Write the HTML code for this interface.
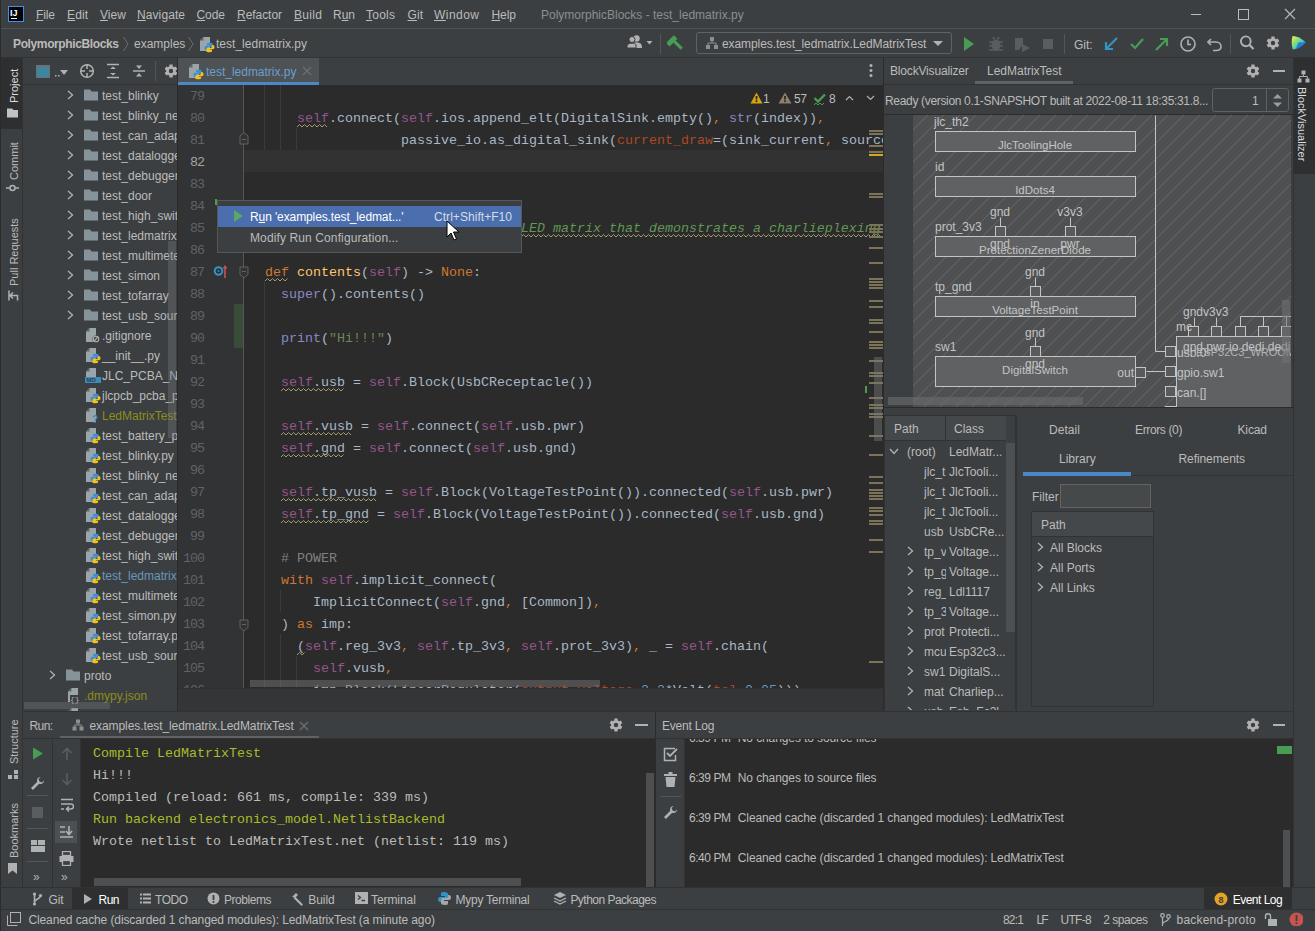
<!DOCTYPE html><html><head><meta charset="utf-8"><style>
*{box-sizing:border-box;margin:0;padding:0}
html,body{width:1315px;height:931px;overflow:hidden;background:#3c3f41;font-family:"Liberation Sans",sans-serif;font-size:12px;color:#bbbbbb;position:relative}
.a{position:absolute}
.t{position:absolute;white-space:pre}
.mono{font-family:"Liberation Mono",monospace}
.u{text-decoration:underline;text-underline-offset:1px}
</style></head><body>
<div class="a" style="left:0px;top:0px;width:1315px;height:931px;background:#3c3f41;"></div>
<div class="a" style="left:0px;top:28px;width:1315px;height:1px;background:#4f5254;"></div>
<div class="a" style="left:0px;top:57px;width:1315px;height:1px;background:#323232;"></div>
<div class="a" style="left:8px;top:6px;width:16px;height:16px;background:#000;border:1px solid #3d8ef0"></div>
<div class="t " style="left:10px;top:7.38px;font-size:9px;line-height:13px;color:#ffffff;font-weight:700;letter-spacing:0px">IJ</div>
<div class="a" style="left:11px;top:18px;width:6px;height:1px;background:#ffffff;"></div>
<div class="t " style="left:36px;top:7.34px;font-size:12px;line-height:17px;color:#bbbbbb;letter-spacing:-0.112px;"><span class="u">F</span>ile</div>
<div class="t " style="left:67px;top:7.34px;font-size:12px;line-height:17px;color:#bbbbbb;letter-spacing:0.107px;"><span class="u">E</span>dit</div>
<div class="t " style="left:100px;top:7.34px;font-size:12px;line-height:17px;color:#bbbbbb;letter-spacing:0.069px;"><span class="u">V</span>iew</div>
<div class="t " style="left:137px;top:7.34px;font-size:12px;line-height:17px;color:#bbbbbb;letter-spacing:0.091px;"><span class="u">N</span>avigate</div>
<div class="t " style="left:196.5px;top:7.34px;font-size:12px;line-height:17px;color:#bbbbbb;letter-spacing:-0.063px;"><span class="u">C</span>ode</div>
<div class="t " style="left:237px;top:7.34px;font-size:12px;line-height:17px;color:#bbbbbb;letter-spacing:-0.050px;"><span class="u">R</span>efactor</div>
<div class="t " style="left:294px;top:7.34px;font-size:12px;line-height:17px;color:#bbbbbb;letter-spacing:0.329px;"><span class="u">B</span>uild</div>
<div class="t " style="left:333px;top:7.34px;font-size:12px;line-height:17px;color:#bbbbbb;letter-spacing:-0.007px;">R<span class="u">u</span>n</div>
<div class="t " style="left:366px;top:7.34px;font-size:12px;line-height:17px;color:#bbbbbb;letter-spacing:0.246px;"><span class="u">T</span>ools</div>
<div class="t " style="left:407.5px;top:7.34px;font-size:12px;line-height:17px;color:#bbbbbb;letter-spacing:0.083px;"><span class="u">G</span>it</div>
<div class="t " style="left:434px;top:7.34px;font-size:12px;line-height:17px;color:#bbbbbb;letter-spacing:0.464px;"><span class="u">W</span>indow</div>
<div class="t " style="left:491.5px;top:7.34px;font-size:12px;line-height:17px;color:#bbbbbb;letter-spacing:-0.060px;"><span class="u">H</span>elp</div>
<div class="t " style="left:541px;top:7.34px;font-size:12px;line-height:17px;color:#8b8e90;">PolymorphicBlocks - test_ledmatrix.py</div>
<div class="a" style="left:1191px;top:14px;width:10px;height:1px;background:#bbbbbb;"></div>
<div class="a" style="left:1238px;top:9px;width:11px;height:11px;border:1px solid #bbbbbb"></div>
<svg class="a" style="left:1284px;top:8px;" width="12" height="12" viewBox="0 0 12 12"><path d="M1 1L11 11M11 1L1 11" stroke="#bbbbbb" stroke-width="1.1"/></svg>
<div class="t " style="left:13px;top:36.34px;font-size:12px;line-height:17px;color:#bbbbbb;font-weight:700;letter-spacing:-0.377px;">PolymorphicBlocks</div>
<svg class="a" style="left:122px;top:36px;" width="8" height="16" viewBox="0 0 8 16"><path d="M1.5 1L6 8L1.5 15" stroke="#6b6e70" fill="none" stroke-width="1"/></svg>
<div class="t " style="left:134px;top:36.34px;font-size:12px;line-height:17px;color:#bbbbbb;">examples</div>
<svg class="a" style="left:187px;top:36px;" width="8" height="16" viewBox="0 0 8 16"><path d="M1.5 1L6 8L1.5 15" stroke="#6b6e70" fill="none" stroke-width="1"/></svg>
<svg class="a" style="left:199px;top:36px;" width="16" height="17" viewBox="0 0 16 17"><path d="M4.5 1H11V15H1V4.5Z" fill="#9aa4a9"/><path d="M1 4.5L4.5 1V4.5Z" fill="#5f6669"/><circle cx="11" cy="11.5" r="5.6" fill="#3c3f41" opacity="0"/><g transform="translate(5.5,6.5)"><path d="M4.6 0.2C2.4 0.2 2.5 1.2 2.5 1.2V2.7H4.7V3.2H1.6C0.2 3.2 0 4.3 0 5.4C0 6.6 0.6 7.6 1.6 7.6H2.5V6.3C2.5 5.3 3.3 4.6 4.3 4.6H6.7C7.5 4.6 8.1 4 8.1 3.2V1.2C8.1 0.6 7.4 0.2 4.6 0.2Z" fill="#3d8fd1"/><path d="M5.4 9.8C7.6 9.8 7.5 8.8 7.5 8.8V7.3H5.3V6.8H8.4C9.8 6.8 10 5.7 10 4.6C10 3.4 9.4 2.4 8.4 2.4H7.5V3.7C7.5 4.7 6.7 5.4 5.7 5.4H3.3C2.5 5.4 1.9 6 1.9 6.8V8.8C1.9 9.4 2.6 9.8 5.4 9.8Z" fill="#f2c41b"/></g></svg>
<div class="t " style="left:216px;top:36.34px;font-size:12px;line-height:17px;color:#bbbbbb;letter-spacing:0.018px;">test_ledmatrix.py</div>
<svg class="a" style="left:627px;top:34px;" width="28" height="16" viewBox="0 0 28 16"><circle cx="9.5" cy="4.5" r="3.2" fill="#afb1b3"/><path d="M4 14C4 9.5 6 8.5 9.5 8.5C13 8.5 15 9.5 15 14Z" fill="#afb1b3"/><circle cx="5" cy="5.5" r="3" fill="#afb1b3" stroke="#3c3f41" stroke-width="1"/><path d="M0 14C0 10 1.5 9.2 5 9.2C7 9.2 8.5 9.8 9 11V14Z" fill="#afb1b3" stroke="#3c3f41" stroke-width="1"/><path d="M19.5 7H25.5L22.5 10.5Z" fill="#afb1b3"/></svg>
<div class="a" style="left:660px;top:34px;width:1px;height:20px;background:#515658;"></div>
<svg class="a" style="left:667px;top:34px;" width="18" height="18" viewBox="0 0 18 18"><g transform="rotate(-45 9 9)"><rect x="2" y="2" width="11" height="5" fill="#499c54"/><rect x="7.5" y="6" width="3" height="11" fill="#499c54"/></g></svg>
<div class="a" style="left:696px;top:32px;width:256px;height:22px;border:1px solid #5e6365;border-radius:3px"></div>
<svg class="a" style="left:705px;top:36px;" width="14" height="14" viewBox="0 0 14 14"><rect x="5" y="1" width="4" height="4" fill="#8c8e90"/><rect x="1" y="9" width="4" height="4" fill="#8c8e90"/><rect x="9" y="9" width="4" height="4" fill="#8c8e90"/><path d="M7 5V7M3 9V7H11V9" stroke="#8c8e90" fill="none"/></svg>
<div class="t " style="left:722px;top:36.34px;font-size:12px;line-height:17px;color:#bbbbbb;letter-spacing:-0.084px;">examples.test_ledmatrix.LedMatrixTest</div>
<svg class="a" style="left:932px;top:40px;" width="12" height="8" viewBox="0 0 12 8"><path d="M1 1H11L6 6Z" fill="#afb1b3"/></svg>
<svg class="a" style="left:963px;top:36px;" width="12" height="16" viewBox="0 0 12 16"><path d="M1 1L11 8L1 15Z" fill="#499c54"/></svg>
<svg class="a" style="left:988px;top:35px;" width="16" height="17" viewBox="0 0 16 17"><ellipse cx="8" cy="10" rx="4.5" ry="5.5" fill="#5a5d5f"/><path d="M1 7H15M1 11H15M1 15H15M5 2L6.5 4.5M11 2L9.5 4.5" stroke="#5a5d5f" stroke-width="1.5"/></svg>
<svg class="a" style="left:1013px;top:36px;" width="18" height="17" viewBox="0 0 18 17"><path d="M2 2H10V8L6 14H2Z" fill="#5a5d5f"/><path d="M9 8L17 12L9 16Z" fill="#5a5d5f"/></svg>
<div class="a" style="left:1043px;top:39px;width:10px;height:10px;background:#5a5d5f;"></div>
<div class="a" style="left:1064px;top:34px;width:1px;height:20px;background:#515658;"></div>
<div class="t " style="left:1074px;top:37.34px;font-size:12px;line-height:17px;color:#bbbbbb;">Git:</div>
<svg class="a" style="left:1103px;top:36px;" width="16" height="16" viewBox="0 0 16 16"><path d="M14 2L3 13M3 6V13H10" stroke="#3592c4" stroke-width="2.2" fill="none"/></svg>
<svg class="a" style="left:1129px;top:36px;" width="16" height="16" viewBox="0 0 16 16"><path d="M2 8L6 12L14 3" stroke="#499c54" stroke-width="2.2" fill="none"/></svg>
<svg class="a" style="left:1154px;top:36px;" width="16" height="16" viewBox="0 0 16 16"><path d="M2 14L13 3M6 3H13V10" stroke="#499c54" stroke-width="2.2" fill="none"/></svg>
<svg class="a" style="left:1179px;top:35px;" width="18" height="18" viewBox="0 0 18 18"><circle cx="9" cy="9" r="7" stroke="#afb1b3" stroke-width="1.6" fill="none"/><path d="M9 4.5V9.5H12" stroke="#afb1b3" stroke-width="1.6" fill="none"/></svg>
<svg class="a" style="left:1207px;top:36px;" width="16" height="16" viewBox="0 0 16 16"><path d="M4 3L1 6L4 9" stroke="#afb1b3" stroke-width="1.6" fill="none"/><path d="M1.5 6H9C12 6 14 8 14 10.5C14 13 12 14.5 9 14.5H6" stroke="#afb1b3" stroke-width="1.6" fill="none"/></svg>
<div class="a" style="left:1230px;top:34px;width:1px;height:20px;background:#515658;"></div>
<svg class="a" style="left:1239px;top:34px;" width="17" height="17" viewBox="0 0 17 17"><circle cx="6.8" cy="7.3" r="4.9" stroke="#afb1b3" stroke-width="1.9" fill="none"/><path d="M10.3 10.8L14.5 15" stroke="#afb1b3" stroke-width="2.2"/></svg>
<svg class="a" style="left:1266px;top:36px;" width="14" height="14" viewBox="0 0 14 14"><g transform="scale(1.0)"><path d="M5.32 2.40L5.40 0.60L8.60 0.60L8.68 2.40L9.45 2.76L10.15 3.25L11.75 2.42L13.34 5.18L11.83 6.15L11.90 7.00L11.83 7.85L13.34 8.82L11.75 11.58L10.15 10.75L9.45 11.24L8.68 11.60L8.60 13.40L5.40 13.40L5.32 11.60L4.55 11.24L3.85 10.75L2.25 11.58L0.66 8.82L2.17 7.85L2.10 7.00L2.17 6.15L0.66 5.18L2.25 2.42L3.85 3.25L4.55 2.76Z" fill="#afb1b3"/><circle cx="7" cy="7" r="2.2" fill="#3c3f41"/></g></svg>
<svg class="a" style="left:1291px;top:35px;" width="16" height="16" viewBox="0 0 16 16"><defs><linearGradient id="lg1" x1="0" y1="0" x2="1" y2="1"><stop offset="0" stop-color="#f5f23a"/><stop offset="0.35" stop-color="#8fdc7c"/><stop offset="0.7" stop-color="#21c7d9"/><stop offset="1" stop-color="#1a7fe0"/></linearGradient></defs><path d="M1.5 1C6 1 10 3 14.5 7.2C11 11.5 6.5 14 1.8 14.6C0.4 10 0.3 5.5 1.5 1Z" fill="url(#lg1)"/><path d="M7.5 7.2H14.5C11 11.5 8 13.5 4.5 14.3Z" fill="#1d6fd8" opacity="0.8"/></svg>
<div class="a" style="left:0px;top:0px;width:1px;height:931px;background:#2b2b2b;"></div>
<div class="a" style="left:22px;top:58px;width:1px;height:830px;background:#323232;"></div>
<div class="a" style="left:1px;top:58px;width:21px;height:71px;background:#2d2f30;"></div>
<div class="t" style="left:13.7px;top:102.5px;font-size:11px;line-height:14px;color:#dddddd;transform-origin:0 0;transform:rotate(-90deg) translate(0,-7px)">Project</div>
<svg class="a" style="left:7px;top:108px;" width="12" height="10" viewBox="0 0 12 10"><path d="M0 0.5H5L6.5 2H11V9.5H0Z" fill="#c0c2c4"/></svg>
<div class="t" style="left:13.7px;top:179.5px;font-size:11px;line-height:14px;color:#bbbbbb;transform-origin:0 0;transform:rotate(-90deg) translate(0,-7px)">Commit</div>
<svg class="a" style="left:6px;top:184px;" width="13" height="8" viewBox="0 0 13 8"><circle cx="6.5" cy="4" r="2.5" stroke="#afb1b3" stroke-width="1.6" fill="none"/><path d="M0 4H3.5M9.5 4H13" stroke="#afb1b3" stroke-width="1.6"/></svg>
<div class="t" style="left:13.7px;top:285.5px;font-size:11px;line-height:14px;color:#bbbbbb;transform-origin:0 0;transform:rotate(-90deg) translate(0,-7px)">Pull Requests</div>
<svg class="a" style="left:8px;top:290px;" width="11" height="11" viewBox="0 0 11 11"><path d="M1 0.5V10.5M1.5 5.5H10M5 2.5L2 5.5L5 8.5M9.5 5V10.5" stroke="#afb1b3" stroke-width="1.5" fill="none"/></svg>
<div class="a" style="left:1293px;top:58px;width:1px;height:830px;background:#323232;"></div>
<div class="a" style="left:1294px;top:58px;width:21px;height:116px;background:#2d2f30;"></div>
<div class="a" style="left:23px;top:84px;width:154px;height:1px;background:#323232;"></div>
<div class="a" style="left:177px;top:58px;width:1px;height:654px;background:#2b2b2b;"></div>
<div class="a" style="left:36px;top:65px;width:14px;height:13px;border:1px solid #6e7173;border-top-width:2px;background:#3e86a0"></div>
<svg class="a" style="left:55px;top:68px;" width="13" height="10" viewBox="0 0 13 10"><rect x="0" y="7" width="1.5" height="1.5" fill="#afb1b3"/><rect x="3" y="7" width="1.5" height="1.5" fill="#afb1b3"/><path d="M5 2H13L9 7Z" fill="#afb1b3"/></svg>
<svg class="a" style="left:79px;top:63px;" width="16" height="16" viewBox="0 0 16 16"><circle cx="8" cy="8" r="6.3" stroke="#afb1b3" stroke-width="1.5" fill="none"/><path d="M8 1V6M8 10V15M1 8H6M10 8H15" stroke="#afb1b3" stroke-width="1.5"/></svg>
<svg class="a" style="left:106px;top:63px;" width="14" height="16" viewBox="0 0 14 16"><path d="M1 1.5H13M1 14.5H13" stroke="#afb1b3" stroke-width="1.5"/><path d="M4 6L7 3.5L10 6ZM4 10L7 12.5L10 10Z" fill="#afb1b3"/></svg>
<svg class="a" style="left:132px;top:63px;" width="14" height="16" viewBox="0 0 14 16"><path d="M1 8H13" stroke="#afb1b3" stroke-width="1.5"/><path d="M4 2.5L7 6L10 2.5ZM4 13.5L7 10L10 13.5Z" fill="#afb1b3"/></svg>
<div class="a" style="left:155px;top:61px;width:1px;height:20px;background:#515658;"></div>
<div class="a" style="left:164px;top:64px;width:13px;height:14px;overflow:hidden"><svg width="14" height="14" viewBox="0 0 14 14"><g transform="scale(1.0)"><path d="M5.32 2.40L5.40 0.60L8.60 0.60L8.68 2.40L9.45 2.76L10.15 3.25L11.75 2.42L13.34 5.18L11.83 6.15L11.90 7.00L11.83 7.85L13.34 8.82L11.75 11.58L10.15 10.75L9.45 11.24L8.68 11.60L8.60 13.40L5.40 13.40L5.32 11.60L4.55 11.24L3.85 10.75L2.25 11.58L0.66 8.82L2.17 7.85L2.10 7.00L2.17 6.15L0.66 5.18L2.25 2.42L3.85 3.25L4.55 2.76Z" fill="#afb1b3"/><circle cx="7" cy="7" r="2.2" fill="#3c3f41"/></g></svg></div>
<div class="a" style="left:23px;top:85px;width:154px;height:627px;overflow:hidden">
<svg class="a" style="left:44px;top:5px;" width="7" height="10" viewBox="0 0 7 10"><path d="M1 1L5.5 5L1 9" stroke="#afb1b3" stroke-width="1.3" fill="none"/></svg>
<svg class="a" style="left:61px;top:4px;" width="15" height="12" viewBox="0 0 15 12"><path d="M0 0.5H6L7.5 2.5H14V11.5H0Z" fill="#87939a"/></svg>
<div class="t " style="left:79px;top:3.34px;font-size:12px;line-height:17px;color:#bbbbbb;">test_blinky</div>
<svg class="a" style="left:44px;top:25px;" width="7" height="10" viewBox="0 0 7 10"><path d="M1 1L5.5 5L1 9" stroke="#afb1b3" stroke-width="1.3" fill="none"/></svg>
<svg class="a" style="left:61px;top:24px;" width="15" height="12" viewBox="0 0 15 12"><path d="M0 0.5H6L7.5 2.5H14V11.5H0Z" fill="#87939a"/></svg>
<div class="t " style="left:79px;top:23.34px;font-size:12px;line-height:17px;color:#bbbbbb;">test_blinky_new</div>
<svg class="a" style="left:44px;top:45px;" width="7" height="10" viewBox="0 0 7 10"><path d="M1 1L5.5 5L1 9" stroke="#afb1b3" stroke-width="1.3" fill="none"/></svg>
<svg class="a" style="left:61px;top:44px;" width="15" height="12" viewBox="0 0 15 12"><path d="M0 0.5H6L7.5 2.5H14V11.5H0Z" fill="#87939a"/></svg>
<div class="t " style="left:79px;top:43.34px;font-size:12px;line-height:17px;color:#bbbbbb;">test_can_adapter</div>
<svg class="a" style="left:44px;top:65px;" width="7" height="10" viewBox="0 0 7 10"><path d="M1 1L5.5 5L1 9" stroke="#afb1b3" stroke-width="1.3" fill="none"/></svg>
<svg class="a" style="left:61px;top:64px;" width="15" height="12" viewBox="0 0 15 12"><path d="M0 0.5H6L7.5 2.5H14V11.5H0Z" fill="#87939a"/></svg>
<div class="t " style="left:79px;top:63.34px;font-size:12px;line-height:17px;color:#bbbbbb;">test_datalogger</div>
<svg class="a" style="left:44px;top:85px;" width="7" height="10" viewBox="0 0 7 10"><path d="M1 1L5.5 5L1 9" stroke="#afb1b3" stroke-width="1.3" fill="none"/></svg>
<svg class="a" style="left:61px;top:84px;" width="15" height="12" viewBox="0 0 15 12"><path d="M0 0.5H6L7.5 2.5H14V11.5H0Z" fill="#87939a"/></svg>
<div class="t " style="left:79px;top:83.34px;font-size:12px;line-height:17px;color:#bbbbbb;">test_debugger</div>
<svg class="a" style="left:44px;top:105px;" width="7" height="10" viewBox="0 0 7 10"><path d="M1 1L5.5 5L1 9" stroke="#afb1b3" stroke-width="1.3" fill="none"/></svg>
<svg class="a" style="left:61px;top:104px;" width="15" height="12" viewBox="0 0 15 12"><path d="M0 0.5H6L7.5 2.5H14V11.5H0Z" fill="#87939a"/></svg>
<div class="t " style="left:79px;top:103.34px;font-size:12px;line-height:17px;color:#bbbbbb;">test_door</div>
<svg class="a" style="left:44px;top:125px;" width="7" height="10" viewBox="0 0 7 10"><path d="M1 1L5.5 5L1 9" stroke="#afb1b3" stroke-width="1.3" fill="none"/></svg>
<svg class="a" style="left:61px;top:124px;" width="15" height="12" viewBox="0 0 15 12"><path d="M0 0.5H6L7.5 2.5H14V11.5H0Z" fill="#87939a"/></svg>
<div class="t " style="left:79px;top:123.34px;font-size:12px;line-height:17px;color:#bbbbbb;">test_high_switch</div>
<svg class="a" style="left:44px;top:145px;" width="7" height="10" viewBox="0 0 7 10"><path d="M1 1L5.5 5L1 9" stroke="#afb1b3" stroke-width="1.3" fill="none"/></svg>
<svg class="a" style="left:61px;top:144px;" width="15" height="12" viewBox="0 0 15 12"><path d="M0 0.5H6L7.5 2.5H14V11.5H0Z" fill="#87939a"/></svg>
<div class="t " style="left:79px;top:143.34px;font-size:12px;line-height:17px;color:#bbbbbb;">test_ledmatrix</div>
<svg class="a" style="left:44px;top:165px;" width="7" height="10" viewBox="0 0 7 10"><path d="M1 1L5.5 5L1 9" stroke="#afb1b3" stroke-width="1.3" fill="none"/></svg>
<svg class="a" style="left:61px;top:164px;" width="15" height="12" viewBox="0 0 15 12"><path d="M0 0.5H6L7.5 2.5H14V11.5H0Z" fill="#87939a"/></svg>
<div class="t " style="left:79px;top:163.34px;font-size:12px;line-height:17px;color:#bbbbbb;">test_multimeter</div>
<svg class="a" style="left:44px;top:185px;" width="7" height="10" viewBox="0 0 7 10"><path d="M1 1L5.5 5L1 9" stroke="#afb1b3" stroke-width="1.3" fill="none"/></svg>
<svg class="a" style="left:61px;top:184px;" width="15" height="12" viewBox="0 0 15 12"><path d="M0 0.5H6L7.5 2.5H14V11.5H0Z" fill="#87939a"/></svg>
<div class="t " style="left:79px;top:183.34px;font-size:12px;line-height:17px;color:#bbbbbb;">test_simon</div>
<svg class="a" style="left:44px;top:205px;" width="7" height="10" viewBox="0 0 7 10"><path d="M1 1L5.5 5L1 9" stroke="#afb1b3" stroke-width="1.3" fill="none"/></svg>
<svg class="a" style="left:61px;top:204px;" width="15" height="12" viewBox="0 0 15 12"><path d="M0 0.5H6L7.5 2.5H14V11.5H0Z" fill="#87939a"/></svg>
<div class="t " style="left:79px;top:203.34px;font-size:12px;line-height:17px;color:#bbbbbb;">test_tofarray</div>
<svg class="a" style="left:44px;top:225px;" width="7" height="10" viewBox="0 0 7 10"><path d="M1 1L5.5 5L1 9" stroke="#afb1b3" stroke-width="1.3" fill="none"/></svg>
<svg class="a" style="left:61px;top:224px;" width="15" height="12" viewBox="0 0 15 12"><path d="M0 0.5H6L7.5 2.5H14V11.5H0Z" fill="#87939a"/></svg>
<div class="t " style="left:79px;top:223.34px;font-size:12px;line-height:17px;color:#bbbbbb;">test_usb_source</div>
<svg class="a" style="left:62px;top:242px;" width="16" height="17" viewBox="0 0 16 17"><path d="M4.5 1H11V15H1V4.5Z" fill="#9aa4a9"/><path d="M1 4.5L4.5 1V4.5Z" fill="#5f6669"/><circle cx="11" cy="12" r="3.6" fill="#3c3f41"/><circle cx="11" cy="12" r="2.8" stroke="#afb1b3" stroke-width="1.1" fill="none"/><path d="M9 14L13 10" stroke="#afb1b3" stroke-width="1.1"/></svg>
<div class="t " style="left:79px;top:243.34px;font-size:12px;line-height:17px;color:#bbbbbb;">.gitignore</div>
<svg class="a" style="left:62px;top:262px;" width="16" height="17" viewBox="0 0 16 17"><path d="M4.5 1H11V15H1V4.5Z" fill="#9aa4a9"/><path d="M1 4.5L4.5 1V4.5Z" fill="#5f6669"/><circle cx="11" cy="11.5" r="5.6" fill="#3c3f41" opacity="0"/><g transform="translate(5.5,6.5)"><path d="M4.6 0.2C2.4 0.2 2.5 1.2 2.5 1.2V2.7H4.7V3.2H1.6C0.2 3.2 0 4.3 0 5.4C0 6.6 0.6 7.6 1.6 7.6H2.5V6.3C2.5 5.3 3.3 4.6 4.3 4.6H6.7C7.5 4.6 8.1 4 8.1 3.2V1.2C8.1 0.6 7.4 0.2 4.6 0.2Z" fill="#3d8fd1"/><path d="M5.4 9.8C7.6 9.8 7.5 8.8 7.5 8.8V7.3H5.3V6.8H8.4C9.8 6.8 10 5.7 10 4.6C10 3.4 9.4 2.4 8.4 2.4H7.5V3.7C7.5 4.7 6.7 5.4 5.7 5.4H3.3C2.5 5.4 1.9 6 1.9 6.8V8.8C1.9 9.4 2.6 9.8 5.4 9.8Z" fill="#f2c41b"/></g></svg>
<div class="t " style="left:79px;top:263.34px;font-size:12px;line-height:17px;color:#bbbbbb;">__init__.py</div>
<svg class="a" style="left:62px;top:282px;" width="16" height="17" viewBox="0 0 16 17"><path d="M4.5 1H11V15H1V4.5Z" fill="#9aa4a9"/><path d="M1 4.5L4.5 1V4.5Z" fill="#5f6669"/><rect x="0" y="10" width="16" height="6" fill="#3e8bb8"/><text x="1.5" y="15.3" font-family="Liberation Sans" font-size="6" font-weight="700" fill="#24465c">MD</text></svg>
<div class="t " style="left:79px;top:283.34px;font-size:12px;line-height:17px;color:#bbbbbb;">JLC_PCBA_Notes.md</div>
<svg class="a" style="left:62px;top:302px;" width="16" height="17" viewBox="0 0 16 17"><path d="M4.5 1H11V15H1V4.5Z" fill="#9aa4a9"/><path d="M1 4.5L4.5 1V4.5Z" fill="#5f6669"/><circle cx="11" cy="11.5" r="5.6" fill="#3c3f41" opacity="0"/><g transform="translate(5.5,6.5)"><path d="M4.6 0.2C2.4 0.2 2.5 1.2 2.5 1.2V2.7H4.7V3.2H1.6C0.2 3.2 0 4.3 0 5.4C0 6.6 0.6 7.6 1.6 7.6H2.5V6.3C2.5 5.3 3.3 4.6 4.3 4.6H6.7C7.5 4.6 8.1 4 8.1 3.2V1.2C8.1 0.6 7.4 0.2 4.6 0.2Z" fill="#3d8fd1"/><path d="M5.4 9.8C7.6 9.8 7.5 8.8 7.5 8.8V7.3H5.3V6.8H8.4C9.8 6.8 10 5.7 10 4.6C10 3.4 9.4 2.4 8.4 2.4H7.5V3.7C7.5 4.7 6.7 5.4 5.7 5.4H3.3C2.5 5.4 1.9 6 1.9 6.8V8.8C1.9 9.4 2.6 9.8 5.4 9.8Z" fill="#f2c41b"/></g></svg>
<div class="t " style="left:79px;top:303.34px;font-size:12px;line-height:17px;color:#bbbbbb;">jlcpcb_pcba_postprocess.py</div>
<svg class="a" style="left:62px;top:322px;" width="16" height="17" viewBox="0 0 16 17"><path d="M4.5 1H11V15H1V4.5Z" fill="#9aa4a9"/><path d="M1 4.5L4.5 1V4.5Z" fill="#5f6669"/><text x="7" y="16" font-family="Liberation Sans" font-size="10" font-weight="700" fill="#3592c4">?</text></svg>
<div class="t " style="left:79px;top:323.34px;font-size:12px;line-height:17px;color:#8c8d1c;">LedMatrixTest.net</div>
<svg class="a" style="left:62px;top:342px;" width="16" height="17" viewBox="0 0 16 17"><path d="M4.5 1H11V15H1V4.5Z" fill="#9aa4a9"/><path d="M1 4.5L4.5 1V4.5Z" fill="#5f6669"/><circle cx="11" cy="11.5" r="5.6" fill="#3c3f41" opacity="0"/><g transform="translate(5.5,6.5)"><path d="M4.6 0.2C2.4 0.2 2.5 1.2 2.5 1.2V2.7H4.7V3.2H1.6C0.2 3.2 0 4.3 0 5.4C0 6.6 0.6 7.6 1.6 7.6H2.5V6.3C2.5 5.3 3.3 4.6 4.3 4.6H6.7C7.5 4.6 8.1 4 8.1 3.2V1.2C8.1 0.6 7.4 0.2 4.6 0.2Z" fill="#3d8fd1"/><path d="M5.4 9.8C7.6 9.8 7.5 8.8 7.5 8.8V7.3H5.3V6.8H8.4C9.8 6.8 10 5.7 10 4.6C10 3.4 9.4 2.4 8.4 2.4H7.5V3.7C7.5 4.7 6.7 5.4 5.7 5.4H3.3C2.5 5.4 1.9 6 1.9 6.8V8.8C1.9 9.4 2.6 9.8 5.4 9.8Z" fill="#f2c41b"/></g></svg>
<div class="t " style="left:79px;top:343.34px;font-size:12px;line-height:17px;color:#bbbbbb;">test_battery_protector.py</div>
<svg class="a" style="left:62px;top:362px;" width="16" height="17" viewBox="0 0 16 17"><path d="M4.5 1H11V15H1V4.5Z" fill="#9aa4a9"/><path d="M1 4.5L4.5 1V4.5Z" fill="#5f6669"/><circle cx="11" cy="11.5" r="5.6" fill="#3c3f41" opacity="0"/><g transform="translate(5.5,6.5)"><path d="M4.6 0.2C2.4 0.2 2.5 1.2 2.5 1.2V2.7H4.7V3.2H1.6C0.2 3.2 0 4.3 0 5.4C0 6.6 0.6 7.6 1.6 7.6H2.5V6.3C2.5 5.3 3.3 4.6 4.3 4.6H6.7C7.5 4.6 8.1 4 8.1 3.2V1.2C8.1 0.6 7.4 0.2 4.6 0.2Z" fill="#3d8fd1"/><path d="M5.4 9.8C7.6 9.8 7.5 8.8 7.5 8.8V7.3H5.3V6.8H8.4C9.8 6.8 10 5.7 10 4.6C10 3.4 9.4 2.4 8.4 2.4H7.5V3.7C7.5 4.7 6.7 5.4 5.7 5.4H3.3C2.5 5.4 1.9 6 1.9 6.8V8.8C1.9 9.4 2.6 9.8 5.4 9.8Z" fill="#f2c41b"/></g></svg>
<div class="t " style="left:79px;top:363.34px;font-size:12px;line-height:17px;color:#bbbbbb;">test_blinky.py</div>
<svg class="a" style="left:62px;top:382px;" width="16" height="17" viewBox="0 0 16 17"><path d="M4.5 1H11V15H1V4.5Z" fill="#9aa4a9"/><path d="M1 4.5L4.5 1V4.5Z" fill="#5f6669"/><circle cx="11" cy="11.5" r="5.6" fill="#3c3f41" opacity="0"/><g transform="translate(5.5,6.5)"><path d="M4.6 0.2C2.4 0.2 2.5 1.2 2.5 1.2V2.7H4.7V3.2H1.6C0.2 3.2 0 4.3 0 5.4C0 6.6 0.6 7.6 1.6 7.6H2.5V6.3C2.5 5.3 3.3 4.6 4.3 4.6H6.7C7.5 4.6 8.1 4 8.1 3.2V1.2C8.1 0.6 7.4 0.2 4.6 0.2Z" fill="#3d8fd1"/><path d="M5.4 9.8C7.6 9.8 7.5 8.8 7.5 8.8V7.3H5.3V6.8H8.4C9.8 6.8 10 5.7 10 4.6C10 3.4 9.4 2.4 8.4 2.4H7.5V3.7C7.5 4.7 6.7 5.4 5.7 5.4H3.3C2.5 5.4 1.9 6 1.9 6.8V8.8C1.9 9.4 2.6 9.8 5.4 9.8Z" fill="#f2c41b"/></g></svg>
<div class="t " style="left:79px;top:383.34px;font-size:12px;line-height:17px;color:#bbbbbb;">test_blinky_new.py</div>
<svg class="a" style="left:62px;top:402px;" width="16" height="17" viewBox="0 0 16 17"><path d="M4.5 1H11V15H1V4.5Z" fill="#9aa4a9"/><path d="M1 4.5L4.5 1V4.5Z" fill="#5f6669"/><circle cx="11" cy="11.5" r="5.6" fill="#3c3f41" opacity="0"/><g transform="translate(5.5,6.5)"><path d="M4.6 0.2C2.4 0.2 2.5 1.2 2.5 1.2V2.7H4.7V3.2H1.6C0.2 3.2 0 4.3 0 5.4C0 6.6 0.6 7.6 1.6 7.6H2.5V6.3C2.5 5.3 3.3 4.6 4.3 4.6H6.7C7.5 4.6 8.1 4 8.1 3.2V1.2C8.1 0.6 7.4 0.2 4.6 0.2Z" fill="#3d8fd1"/><path d="M5.4 9.8C7.6 9.8 7.5 8.8 7.5 8.8V7.3H5.3V6.8H8.4C9.8 6.8 10 5.7 10 4.6C10 3.4 9.4 2.4 8.4 2.4H7.5V3.7C7.5 4.7 6.7 5.4 5.7 5.4H3.3C2.5 5.4 1.9 6 1.9 6.8V8.8C1.9 9.4 2.6 9.8 5.4 9.8Z" fill="#f2c41b"/></g></svg>
<div class="t " style="left:79px;top:403.34px;font-size:12px;line-height:17px;color:#bbbbbb;">test_can_adapter.py</div>
<svg class="a" style="left:62px;top:422px;" width="16" height="17" viewBox="0 0 16 17"><path d="M4.5 1H11V15H1V4.5Z" fill="#9aa4a9"/><path d="M1 4.5L4.5 1V4.5Z" fill="#5f6669"/><circle cx="11" cy="11.5" r="5.6" fill="#3c3f41" opacity="0"/><g transform="translate(5.5,6.5)"><path d="M4.6 0.2C2.4 0.2 2.5 1.2 2.5 1.2V2.7H4.7V3.2H1.6C0.2 3.2 0 4.3 0 5.4C0 6.6 0.6 7.6 1.6 7.6H2.5V6.3C2.5 5.3 3.3 4.6 4.3 4.6H6.7C7.5 4.6 8.1 4 8.1 3.2V1.2C8.1 0.6 7.4 0.2 4.6 0.2Z" fill="#3d8fd1"/><path d="M5.4 9.8C7.6 9.8 7.5 8.8 7.5 8.8V7.3H5.3V6.8H8.4C9.8 6.8 10 5.7 10 4.6C10 3.4 9.4 2.4 8.4 2.4H7.5V3.7C7.5 4.7 6.7 5.4 5.7 5.4H3.3C2.5 5.4 1.9 6 1.9 6.8V8.8C1.9 9.4 2.6 9.8 5.4 9.8Z" fill="#f2c41b"/></g></svg>
<div class="t " style="left:79px;top:423.34px;font-size:12px;line-height:17px;color:#bbbbbb;">test_datalogger.py</div>
<svg class="a" style="left:62px;top:442px;" width="16" height="17" viewBox="0 0 16 17"><path d="M4.5 1H11V15H1V4.5Z" fill="#9aa4a9"/><path d="M1 4.5L4.5 1V4.5Z" fill="#5f6669"/><circle cx="11" cy="11.5" r="5.6" fill="#3c3f41" opacity="0"/><g transform="translate(5.5,6.5)"><path d="M4.6 0.2C2.4 0.2 2.5 1.2 2.5 1.2V2.7H4.7V3.2H1.6C0.2 3.2 0 4.3 0 5.4C0 6.6 0.6 7.6 1.6 7.6H2.5V6.3C2.5 5.3 3.3 4.6 4.3 4.6H6.7C7.5 4.6 8.1 4 8.1 3.2V1.2C8.1 0.6 7.4 0.2 4.6 0.2Z" fill="#3d8fd1"/><path d="M5.4 9.8C7.6 9.8 7.5 8.8 7.5 8.8V7.3H5.3V6.8H8.4C9.8 6.8 10 5.7 10 4.6C10 3.4 9.4 2.4 8.4 2.4H7.5V3.7C7.5 4.7 6.7 5.4 5.7 5.4H3.3C2.5 5.4 1.9 6 1.9 6.8V8.8C1.9 9.4 2.6 9.8 5.4 9.8Z" fill="#f2c41b"/></g></svg>
<div class="t " style="left:79px;top:443.34px;font-size:12px;line-height:17px;color:#bbbbbb;">test_debugger.py</div>
<svg class="a" style="left:62px;top:462px;" width="16" height="17" viewBox="0 0 16 17"><path d="M4.5 1H11V15H1V4.5Z" fill="#9aa4a9"/><path d="M1 4.5L4.5 1V4.5Z" fill="#5f6669"/><circle cx="11" cy="11.5" r="5.6" fill="#3c3f41" opacity="0"/><g transform="translate(5.5,6.5)"><path d="M4.6 0.2C2.4 0.2 2.5 1.2 2.5 1.2V2.7H4.7V3.2H1.6C0.2 3.2 0 4.3 0 5.4C0 6.6 0.6 7.6 1.6 7.6H2.5V6.3C2.5 5.3 3.3 4.6 4.3 4.6H6.7C7.5 4.6 8.1 4 8.1 3.2V1.2C8.1 0.6 7.4 0.2 4.6 0.2Z" fill="#3d8fd1"/><path d="M5.4 9.8C7.6 9.8 7.5 8.8 7.5 8.8V7.3H5.3V6.8H8.4C9.8 6.8 10 5.7 10 4.6C10 3.4 9.4 2.4 8.4 2.4H7.5V3.7C7.5 4.7 6.7 5.4 5.7 5.4H3.3C2.5 5.4 1.9 6 1.9 6.8V8.8C1.9 9.4 2.6 9.8 5.4 9.8Z" fill="#f2c41b"/></g></svg>
<div class="t " style="left:79px;top:463.34px;font-size:12px;line-height:17px;color:#bbbbbb;">test_high_switch.py</div>
<svg class="a" style="left:62px;top:482px;" width="16" height="17" viewBox="0 0 16 17"><path d="M4.5 1H11V15H1V4.5Z" fill="#9aa4a9"/><path d="M1 4.5L4.5 1V4.5Z" fill="#5f6669"/><circle cx="11" cy="11.5" r="5.6" fill="#3c3f41" opacity="0"/><g transform="translate(5.5,6.5)"><path d="M4.6 0.2C2.4 0.2 2.5 1.2 2.5 1.2V2.7H4.7V3.2H1.6C0.2 3.2 0 4.3 0 5.4C0 6.6 0.6 7.6 1.6 7.6H2.5V6.3C2.5 5.3 3.3 4.6 4.3 4.6H6.7C7.5 4.6 8.1 4 8.1 3.2V1.2C8.1 0.6 7.4 0.2 4.6 0.2Z" fill="#3d8fd1"/><path d="M5.4 9.8C7.6 9.8 7.5 8.8 7.5 8.8V7.3H5.3V6.8H8.4C9.8 6.8 10 5.7 10 4.6C10 3.4 9.4 2.4 8.4 2.4H7.5V3.7C7.5 4.7 6.7 5.4 5.7 5.4H3.3C2.5 5.4 1.9 6 1.9 6.8V8.8C1.9 9.4 2.6 9.8 5.4 9.8Z" fill="#f2c41b"/></g></svg>
<div class="t " style="left:79px;top:483.34px;font-size:12px;line-height:17px;color:#6897bb;">test_ledmatrix.py</div>
<svg class="a" style="left:62px;top:502px;" width="16" height="17" viewBox="0 0 16 17"><path d="M4.5 1H11V15H1V4.5Z" fill="#9aa4a9"/><path d="M1 4.5L4.5 1V4.5Z" fill="#5f6669"/><circle cx="11" cy="11.5" r="5.6" fill="#3c3f41" opacity="0"/><g transform="translate(5.5,6.5)"><path d="M4.6 0.2C2.4 0.2 2.5 1.2 2.5 1.2V2.7H4.7V3.2H1.6C0.2 3.2 0 4.3 0 5.4C0 6.6 0.6 7.6 1.6 7.6H2.5V6.3C2.5 5.3 3.3 4.6 4.3 4.6H6.7C7.5 4.6 8.1 4 8.1 3.2V1.2C8.1 0.6 7.4 0.2 4.6 0.2Z" fill="#3d8fd1"/><path d="M5.4 9.8C7.6 9.8 7.5 8.8 7.5 8.8V7.3H5.3V6.8H8.4C9.8 6.8 10 5.7 10 4.6C10 3.4 9.4 2.4 8.4 2.4H7.5V3.7C7.5 4.7 6.7 5.4 5.7 5.4H3.3C2.5 5.4 1.9 6 1.9 6.8V8.8C1.9 9.4 2.6 9.8 5.4 9.8Z" fill="#f2c41b"/></g></svg>
<div class="t " style="left:79px;top:503.34px;font-size:12px;line-height:17px;color:#bbbbbb;">test_multimeter.py</div>
<svg class="a" style="left:62px;top:522px;" width="16" height="17" viewBox="0 0 16 17"><path d="M4.5 1H11V15H1V4.5Z" fill="#9aa4a9"/><path d="M1 4.5L4.5 1V4.5Z" fill="#5f6669"/><circle cx="11" cy="11.5" r="5.6" fill="#3c3f41" opacity="0"/><g transform="translate(5.5,6.5)"><path d="M4.6 0.2C2.4 0.2 2.5 1.2 2.5 1.2V2.7H4.7V3.2H1.6C0.2 3.2 0 4.3 0 5.4C0 6.6 0.6 7.6 1.6 7.6H2.5V6.3C2.5 5.3 3.3 4.6 4.3 4.6H6.7C7.5 4.6 8.1 4 8.1 3.2V1.2C8.1 0.6 7.4 0.2 4.6 0.2Z" fill="#3d8fd1"/><path d="M5.4 9.8C7.6 9.8 7.5 8.8 7.5 8.8V7.3H5.3V6.8H8.4C9.8 6.8 10 5.7 10 4.6C10 3.4 9.4 2.4 8.4 2.4H7.5V3.7C7.5 4.7 6.7 5.4 5.7 5.4H3.3C2.5 5.4 1.9 6 1.9 6.8V8.8C1.9 9.4 2.6 9.8 5.4 9.8Z" fill="#f2c41b"/></g></svg>
<div class="t " style="left:79px;top:523.34px;font-size:12px;line-height:17px;color:#bbbbbb;">test_simon.py</div>
<svg class="a" style="left:62px;top:542px;" width="16" height="17" viewBox="0 0 16 17"><path d="M4.5 1H11V15H1V4.5Z" fill="#9aa4a9"/><path d="M1 4.5L4.5 1V4.5Z" fill="#5f6669"/><circle cx="11" cy="11.5" r="5.6" fill="#3c3f41" opacity="0"/><g transform="translate(5.5,6.5)"><path d="M4.6 0.2C2.4 0.2 2.5 1.2 2.5 1.2V2.7H4.7V3.2H1.6C0.2 3.2 0 4.3 0 5.4C0 6.6 0.6 7.6 1.6 7.6H2.5V6.3C2.5 5.3 3.3 4.6 4.3 4.6H6.7C7.5 4.6 8.1 4 8.1 3.2V1.2C8.1 0.6 7.4 0.2 4.6 0.2Z" fill="#3d8fd1"/><path d="M5.4 9.8C7.6 9.8 7.5 8.8 7.5 8.8V7.3H5.3V6.8H8.4C9.8 6.8 10 5.7 10 4.6C10 3.4 9.4 2.4 8.4 2.4H7.5V3.7C7.5 4.7 6.7 5.4 5.7 5.4H3.3C2.5 5.4 1.9 6 1.9 6.8V8.8C1.9 9.4 2.6 9.8 5.4 9.8Z" fill="#f2c41b"/></g></svg>
<div class="t " style="left:79px;top:543.34px;font-size:12px;line-height:17px;color:#bbbbbb;">test_tofarray.py</div>
<svg class="a" style="left:62px;top:562px;" width="16" height="17" viewBox="0 0 16 17"><path d="M4.5 1H11V15H1V4.5Z" fill="#9aa4a9"/><path d="M1 4.5L4.5 1V4.5Z" fill="#5f6669"/><circle cx="11" cy="11.5" r="5.6" fill="#3c3f41" opacity="0"/><g transform="translate(5.5,6.5)"><path d="M4.6 0.2C2.4 0.2 2.5 1.2 2.5 1.2V2.7H4.7V3.2H1.6C0.2 3.2 0 4.3 0 5.4C0 6.6 0.6 7.6 1.6 7.6H2.5V6.3C2.5 5.3 3.3 4.6 4.3 4.6H6.7C7.5 4.6 8.1 4 8.1 3.2V1.2C8.1 0.6 7.4 0.2 4.6 0.2Z" fill="#3d8fd1"/><path d="M5.4 9.8C7.6 9.8 7.5 8.8 7.5 8.8V7.3H5.3V6.8H8.4C9.8 6.8 10 5.7 10 4.6C10 3.4 9.4 2.4 8.4 2.4H7.5V3.7C7.5 4.7 6.7 5.4 5.7 5.4H3.3C2.5 5.4 1.9 6 1.9 6.8V8.8C1.9 9.4 2.6 9.8 5.4 9.8Z" fill="#f2c41b"/></g></svg>
<div class="t " style="left:79px;top:563.34px;font-size:12px;line-height:17px;color:#bbbbbb;">test_usb_source.py</div>
<svg class="a" style="left:26px;top:585px;" width="7" height="10" viewBox="0 0 7 10"><path d="M1 1L5.5 5L1 9" stroke="#afb1b3" stroke-width="1.3" fill="none"/></svg>
<svg class="a" style="left:43px;top:584px;" width="15" height="12" viewBox="0 0 15 12"><path d="M0 0.5H6L7.5 2.5H14V11.5H0Z" fill="#87939a"/></svg>
<div class="t " style="left:61px;top:583.34px;font-size:12px;line-height:17px;color:#bbbbbb;">proto</div>
<svg class="a" style="left:44px;top:602px;" width="16" height="17" viewBox="0 0 16 17"><path d="M4.5 1H11V15H1V4.5Z" fill="#9aa4a9"/><path d="M1 4.5L4.5 1V4.5Z" fill="#5f6669"/><rect x="3" y="8" width="10" height="8" fill="#3c3f41"/><text x="3" y="15" font-family="Liberation Mono" font-size="8" fill="#afb1b3">{}</text></svg>
<div class="t " style="left:61px;top:603.34px;font-size:12px;line-height:17px;color:#8c8d1c;">.dmypy.json</div>
<svg class="a" style="left:44px;top:622px;" width="16" height="17" viewBox="0 0 16 17"><path d="M4.5 1H11V15H1V4.5Z" fill="#9aa4a9"/><path d="M1 4.5L4.5 1V4.5Z" fill="#5f6669"/><circle cx="11" cy="11.5" r="5.6" fill="#3c3f41" opacity="0"/><g transform="translate(5.5,6.5)"><path d="M4.6 0.2C2.4 0.2 2.5 1.2 2.5 1.2V2.7H4.7V3.2H1.6C0.2 3.2 0 4.3 0 5.4C0 6.6 0.6 7.6 1.6 7.6H2.5V6.3C2.5 5.3 3.3 4.6 4.3 4.6H6.7C7.5 4.6 8.1 4 8.1 3.2V1.2C8.1 0.6 7.4 0.2 4.6 0.2Z" fill="#3d8fd1"/><path d="M5.4 9.8C7.6 9.8 7.5 8.8 7.5 8.8V7.3H5.3V6.8H8.4C9.8 6.8 10 5.7 10 4.6C10 3.4 9.4 2.4 8.4 2.4H7.5V3.7C7.5 4.7 6.7 5.4 5.7 5.4H3.3C2.5 5.4 1.9 6 1.9 6.8V8.8C1.9 9.4 2.6 9.8 5.4 9.8Z" fill="#f2c41b"/></g></svg>
</div>
<div class="a" style="left:168px;top:241px;width:8px;height:197px;background:rgba(120,124,128,0.35);"></div>
<div class="a" style="left:24px;top:702px;width:86px;height:7px;background:rgba(120,124,128,0.35);"></div>
<div class="a" style="left:178px;top:58px;width:705px;height:27px;background:#3c3f41;"></div>
<div class="a" style="left:178px;top:58px;width:141px;height:24px;background:#4e5254;"></div>
<div class="a" style="left:178px;top:82px;width:141px;height:3px;background:#4a88c7;"></div>
<svg class="a" style="left:188px;top:63px;" width="16" height="17" viewBox="0 0 16 17"><path d="M4.5 1H11V15H1V4.5Z" fill="#9aa4a9"/><path d="M1 4.5L4.5 1V4.5Z" fill="#5f6669"/><circle cx="11" cy="11.5" r="5.6" fill="#4e5254" opacity="0"/><g transform="translate(5.5,6.5)"><path d="M4.6 0.2C2.4 0.2 2.5 1.2 2.5 1.2V2.7H4.7V3.2H1.6C0.2 3.2 0 4.3 0 5.4C0 6.6 0.6 7.6 1.6 7.6H2.5V6.3C2.5 5.3 3.3 4.6 4.3 4.6H6.7C7.5 4.6 8.1 4 8.1 3.2V1.2C8.1 0.6 7.4 0.2 4.6 0.2Z" fill="#3d8fd1"/><path d="M5.4 9.8C7.6 9.8 7.5 8.8 7.5 8.8V7.3H5.3V6.8H8.4C9.8 6.8 10 5.7 10 4.6C10 3.4 9.4 2.4 8.4 2.4H7.5V3.7C7.5 4.7 6.7 5.4 5.7 5.4H3.3C2.5 5.4 1.9 6 1.9 6.8V8.8C1.9 9.4 2.6 9.8 5.4 9.8Z" fill="#f2c41b"/></g></svg>
<div class="t " style="left:206px;top:64.34px;font-size:12px;line-height:17px;color:#6a9fcf;letter-spacing:-0.019px;">test_ledmatrix.py</div>
<svg class="a" style="left:302px;top:66px;" width="10" height="10" viewBox="0 0 10 10"><path d="M1 1L9 9M9 1L1 9" stroke="#6e7173" stroke-width="1.1"/></svg>
<svg class="a" style="left:868px;top:63px;" width="6" height="16" viewBox="0 0 6 16"><circle cx="3" cy="2.5" r="1.5" fill="#afb1b3"/><circle cx="3" cy="7.5" r="1.5" fill="#afb1b3"/><circle cx="3" cy="12.5" r="1.5" fill="#afb1b3"/></svg>
<div class="a" style="left:883px;top:58px;width:1px;height:654px;background:#2b2b2b;"></div>
<div class="a" style="left:178px;top:85px;width:705px;height:603px;background:#2b2b2b;overflow:hidden">
<div class="a" style="left:0px;top:0px;width:66px;height:603px;background:#313335;"></div>
<div class="a" style="left:66px;top:65px;width:639px;height:22px;background:#323232;"></div>
<div class="a" style="left:65px;top:0px;width:1px;height:603px;background:#555759;"></div>
<div class="a" style="left:86px;top:0px;width:1px;height:65px;background:#393b3c;"></div>
<div class="a" style="left:102px;top:0px;width:1px;height:65px;background:#393b3c;"></div>
<div class="a" style="left:118px;top:43px;width:1px;height:22px;background:#393b3c;"></div>
<div class="a" style="left:86px;top:197px;width:1px;height:406px;background:#393b3c;"></div>
<div class="a" style="left:102px;top:505px;width:1px;height:22px;background:#393b3c;"></div>
<div class="a" style="left:102px;top:549px;width:1px;height:54px;background:#393b3c;"></div>
<div class="a" style="left:118px;top:571px;width:1px;height:32px;background:#393b3c;"></div>
<div class="t mono" style="left:12px;top:1px;font-size:13.33px;line-height:22px;letter-spacing:-1px;color:#606366">79</div>
<div class="t mono" style="left:12px;top:23px;font-size:13.33px;line-height:22px;letter-spacing:-1px;color:#606366">80</div>
<div class="t mono" style="left:12px;top:45px;font-size:13.33px;line-height:22px;letter-spacing:-1px;color:#606366">81</div>
<div class="t mono" style="left:12px;top:67px;font-size:13.33px;line-height:22px;letter-spacing:-1px;color:#a4a3a3">82</div>
<div class="t mono" style="left:12px;top:89px;font-size:13.33px;line-height:22px;letter-spacing:-1px;color:#606366">83</div>
<div class="t mono" style="left:12px;top:111px;font-size:13.33px;line-height:22px;letter-spacing:-1px;color:#606366">84</div>
<div class="t mono" style="left:12px;top:133px;font-size:13.33px;line-height:22px;letter-spacing:-1px;color:#606366">85</div>
<div class="t mono" style="left:12px;top:155px;font-size:13.33px;line-height:22px;letter-spacing:-1px;color:#606366">86</div>
<div class="t mono" style="left:12px;top:177px;font-size:13.33px;line-height:22px;letter-spacing:-1px;color:#606366">87</div>
<div class="t mono" style="left:12px;top:199px;font-size:13.33px;line-height:22px;letter-spacing:-1px;color:#606366">88</div>
<div class="t mono" style="left:12px;top:221px;font-size:13.33px;line-height:22px;letter-spacing:-1px;color:#606366">89</div>
<div class="t mono" style="left:12px;top:243px;font-size:13.33px;line-height:22px;letter-spacing:-1px;color:#606366">90</div>
<div class="t mono" style="left:12px;top:265px;font-size:13.33px;line-height:22px;letter-spacing:-1px;color:#606366">91</div>
<div class="t mono" style="left:12px;top:287px;font-size:13.33px;line-height:22px;letter-spacing:-1px;color:#606366">92</div>
<div class="t mono" style="left:12px;top:309px;font-size:13.33px;line-height:22px;letter-spacing:-1px;color:#606366">93</div>
<div class="t mono" style="left:12px;top:331px;font-size:13.33px;line-height:22px;letter-spacing:-1px;color:#606366">94</div>
<div class="t mono" style="left:12px;top:353px;font-size:13.33px;line-height:22px;letter-spacing:-1px;color:#606366">95</div>
<div class="t mono" style="left:12px;top:375px;font-size:13.33px;line-height:22px;letter-spacing:-1px;color:#606366">96</div>
<div class="t mono" style="left:12px;top:397px;font-size:13.33px;line-height:22px;letter-spacing:-1px;color:#606366">97</div>
<div class="t mono" style="left:12px;top:419px;font-size:13.33px;line-height:22px;letter-spacing:-1px;color:#606366">98</div>
<div class="t mono" style="left:12px;top:441px;font-size:13.33px;line-height:22px;letter-spacing:-1px;color:#606366">99</div>
<div class="t mono" style="left:5px;top:463px;font-size:13.33px;line-height:22px;letter-spacing:-1px;color:#606366">100</div>
<div class="t mono" style="left:5px;top:485px;font-size:13.33px;line-height:22px;letter-spacing:-1px;color:#606366">101</div>
<div class="t mono" style="left:5px;top:507px;font-size:13.33px;line-height:22px;letter-spacing:-1px;color:#606366">102</div>
<div class="t mono" style="left:5px;top:529px;font-size:13.33px;line-height:22px;letter-spacing:-1px;color:#606366">103</div>
<div class="t mono" style="left:5px;top:551px;font-size:13.33px;line-height:22px;letter-spacing:-1px;color:#606366">104</div>
<div class="t mono" style="left:5px;top:573px;font-size:13.33px;line-height:22px;letter-spacing:-1px;color:#606366">105</div>
<div class="t mono" style="left:5px;top:595px;font-size:13.33px;line-height:22px;letter-spacing:-1px;color:#606366">106</div>
<div class="t mono" style="left:119.0px;top:23px;font-size:13.33px;line-height:22px;color:#a9b7c6"><span style="color:#94558d">self</span>.connect(<span style="color:#94558d">self</span>.ios.append_elt(DigitalSink.empty()<span style="color:#cc7832">,</span> <span style="color:#8888c6">str</span>(index))<span style="color:#cc7832">,</span></div>
<svg class="a" style="left:119.0px;top:39px" width="32.0" height="4" viewBox="0 0 32.0 4"><path d="M0 3.0L2.5 0.5L5.0 3.0L7.5 0.5L10.0 3.0L12.5 0.5L15.0 3.0L17.5 0.5L20.0 3.0L22.5 0.5L25.0 3.0L27.5 0.5L30.0 3.0" stroke="#a09c6c" stroke-width="1" fill="none"/></svg>
<div class="t mono" style="left:223.0px;top:45px;font-size:13.33px;line-height:22px;color:#a9b7c6">passive_io.as_digital_sink(<span style="color:#aa4926">current_draw</span>=(sink_current<span style="color:#cc7832">,</span> source_current)))</div>
<div class="t mono" style="left:71.0px;top:111px;font-size:13.33px;line-height:22px;color:#a9b7c6"><span style="color:#cc7832">class</span> LedMatrixTest(JlcBoardTop):</div>
<div class="t mono" style="left:71px;top:133px;font-size:13.33px;line-height:22px;color:#629755;font-style:italic">  """Blinky board with a 6x5 grid LED matrix that demonstrates a charlieplexing LED matrix</div>
<div class="t mono" style="left:87.0px;top:177px;font-size:13.33px;line-height:22px;color:#a9b7c6"><span style="color:#cc7832">def</span><span style="color:#ffc66d"> </span><span style="color:#ffc66d">contents</span>(<span style="color:#94558d">self</span>) -&gt; <span style="color:#cc7832">None</span>:</div>
<svg class="a" style="left:87.0px;top:193px" width="24.0" height="4" viewBox="0 0 24.0 4"><path d="M0 3.0L2.5 0.5L5.0 3.0L7.5 0.5L10.0 3.0L12.5 0.5L15.0 3.0L17.5 0.5L20.0 3.0L22.5 0.5" stroke="#a09c6c" stroke-width="1" fill="none"/></svg>
<div class="t mono" style="left:103.0px;top:199px;font-size:13.33px;line-height:22px;color:#a9b7c6"><span style="color:#8888c6">super</span>().contents()</div>
<div class="t mono" style="left:103.0px;top:243px;font-size:13.33px;line-height:22px;color:#a9b7c6"><span style="color:#8888c6">print</span>(<span style="color:#6a8759">&quot;Hi!!!&quot;</span>)</div>
<div class="t mono" style="left:103.0px;top:287px;font-size:13.33px;line-height:22px;color:#a9b7c6"><span style="color:#94558d">self</span>.usb = <span style="color:#94558d">self</span>.Block(UsbCReceptacle())</div>
<svg class="a" style="left:103.0px;top:303px" width="64.0" height="4" viewBox="0 0 64.0 4"><path d="M0 3.0L2.5 0.5L5.0 3.0L7.5 0.5L10.0 3.0L12.5 0.5L15.0 3.0L17.5 0.5L20.0 3.0L22.5 0.5L25.0 3.0L27.5 0.5L30.0 3.0L32.5 0.5L35.0 3.0L37.5 0.5L40.0 3.0L42.5 0.5L45.0 3.0L47.5 0.5L50.0 3.0L52.5 0.5L55.0 3.0L57.5 0.5L60.0 3.0L62.5 0.5" stroke="#a09c6c" stroke-width="1" fill="none"/></svg>
<div class="t mono" style="left:103.0px;top:331px;font-size:13.33px;line-height:22px;color:#a9b7c6"><span style="color:#94558d">self</span>.vusb = <span style="color:#94558d">self</span>.connect(<span style="color:#94558d">self</span>.usb.pwr)</div>
<svg class="a" style="left:103.0px;top:347px" width="72.0" height="4" viewBox="0 0 72.0 4"><path d="M0 3.0L2.5 0.5L5.0 3.0L7.5 0.5L10.0 3.0L12.5 0.5L15.0 3.0L17.5 0.5L20.0 3.0L22.5 0.5L25.0 3.0L27.5 0.5L30.0 3.0L32.5 0.5L35.0 3.0L37.5 0.5L40.0 3.0L42.5 0.5L45.0 3.0L47.5 0.5L50.0 3.0L52.5 0.5L55.0 3.0L57.5 0.5L60.0 3.0L62.5 0.5L65.0 3.0L67.5 0.5L70.0 3.0" stroke="#a09c6c" stroke-width="1" fill="none"/></svg>
<div class="t mono" style="left:103.0px;top:353px;font-size:13.33px;line-height:22px;color:#a9b7c6"><span style="color:#94558d">self</span>.gnd = <span style="color:#94558d">self</span>.connect(<span style="color:#94558d">self</span>.usb.gnd)</div>
<svg class="a" style="left:103.0px;top:369px" width="64.0" height="4" viewBox="0 0 64.0 4"><path d="M0 3.0L2.5 0.5L5.0 3.0L7.5 0.5L10.0 3.0L12.5 0.5L15.0 3.0L17.5 0.5L20.0 3.0L22.5 0.5L25.0 3.0L27.5 0.5L30.0 3.0L32.5 0.5L35.0 3.0L37.5 0.5L40.0 3.0L42.5 0.5L45.0 3.0L47.5 0.5L50.0 3.0L52.5 0.5L55.0 3.0L57.5 0.5L60.0 3.0L62.5 0.5" stroke="#a09c6c" stroke-width="1" fill="none"/></svg>
<div class="t mono" style="left:103.0px;top:397px;font-size:13.33px;line-height:22px;color:#a9b7c6"><span style="color:#94558d">self</span>.tp_vusb = <span style="color:#94558d">self</span>.Block(VoltageTestPoint()).connected(<span style="color:#94558d">self</span>.usb.pwr)</div>
<svg class="a" style="left:103.0px;top:413px" width="96.0" height="4" viewBox="0 0 96.0 4"><path d="M0 3.0L2.5 0.5L5.0 3.0L7.5 0.5L10.0 3.0L12.5 0.5L15.0 3.0L17.5 0.5L20.0 3.0L22.5 0.5L25.0 3.0L27.5 0.5L30.0 3.0L32.5 0.5L35.0 3.0L37.5 0.5L40.0 3.0L42.5 0.5L45.0 3.0L47.5 0.5L50.0 3.0L52.5 0.5L55.0 3.0L57.5 0.5L60.0 3.0L62.5 0.5L65.0 3.0L67.5 0.5L70.0 3.0L72.5 0.5L75.0 3.0L77.5 0.5L80.0 3.0L82.5 0.5L85.0 3.0L87.5 0.5L90.0 3.0L92.5 0.5L95.0 3.0" stroke="#a09c6c" stroke-width="1" fill="none"/></svg>
<div class="t mono" style="left:103.0px;top:419px;font-size:13.33px;line-height:22px;color:#a9b7c6"><span style="color:#94558d">self</span>.tp_gnd = <span style="color:#94558d">self</span>.Block(VoltageTestPoint()).connected(<span style="color:#94558d">self</span>.usb.gnd)</div>
<svg class="a" style="left:103.0px;top:435px" width="88.0" height="4" viewBox="0 0 88.0 4"><path d="M0 3.0L2.5 0.5L5.0 3.0L7.5 0.5L10.0 3.0L12.5 0.5L15.0 3.0L17.5 0.5L20.0 3.0L22.5 0.5L25.0 3.0L27.5 0.5L30.0 3.0L32.5 0.5L35.0 3.0L37.5 0.5L40.0 3.0L42.5 0.5L45.0 3.0L47.5 0.5L50.0 3.0L52.5 0.5L55.0 3.0L57.5 0.5L60.0 3.0L62.5 0.5L65.0 3.0L67.5 0.5L70.0 3.0L72.5 0.5L75.0 3.0L77.5 0.5L80.0 3.0L82.5 0.5L85.0 3.0L87.5 0.5" stroke="#a09c6c" stroke-width="1" fill="none"/></svg>
<div class="t mono" style="left:103.0px;top:463px;font-size:13.33px;line-height:22px;color:#a9b7c6"><span style="color:#808080"># POWER</span></div>
<div class="t mono" style="left:103.0px;top:485px;font-size:13.33px;line-height:22px;color:#a9b7c6"><span style="color:#cc7832">with</span> <span style="color:#94558d">self</span>.implicit_connect(</div>
<div class="t mono" style="left:135.0px;top:507px;font-size:13.33px;line-height:22px;color:#a9b7c6">ImplicitConnect(<span style="color:#94558d">self</span>.gnd<span style="color:#cc7832">,</span> [Common])<span style="color:#cc7832">,</span></div>
<div class="t mono" style="left:103.0px;top:529px;font-size:13.33px;line-height:22px;color:#a9b7c6">) <span style="color:#cc7832">as</span> imp:</div>
<div class="t mono" style="left:119.0px;top:551px;font-size:13.33px;line-height:22px;color:#a9b7c6">(<span style="color:#94558d">self</span>.reg_3v3<span style="color:#cc7832">,</span> <span style="color:#94558d">self</span>.tp_3v3<span style="color:#cc7832">,</span> <span style="color:#94558d">self</span>.prot_3v3)<span style="color:#cc7832">,</span> _ = <span style="color:#94558d">self</span>.chain(</div>
<svg class="a" style="left:119.0px;top:567px" width="8.0" height="4" viewBox="0 0 8.0 4"><path d="M0 3.0L2.5 0.5L5.0 3.0L7.5 0.5" stroke="#a09c6c" stroke-width="1" fill="none"/></svg>
<div class="t mono" style="left:135.0px;top:573px;font-size:13.33px;line-height:22px;color:#a9b7c6"><span style="color:#94558d">self</span>.vusb<span style="color:#cc7832">,</span></div>
<div class="t mono" style="left:135.0px;top:595px;font-size:13.33px;line-height:22px;color:#a9b7c6">imp.Block(LinearRegulator(<span style="color:#aa4926">output_voltage</span>=<span style="color:#6897bb">3</span>.<span style="color:#6897bb">3</span>*Volt(<span style="color:#aa4926">tol</span>=<span style="color:#6897bb">0</span>.<span style="color:#6897bb">05</span>)))<span style="color:#cc7832">,</span></div>
<svg class="a" style="left:343px;top:149px" width="362" height="4" viewBox="0 0 362 4"><path d="M0 3.0L2.5 0.5L5.0 3.0L7.5 0.5L10.0 3.0L12.5 0.5L15.0 3.0L17.5 0.5L20.0 3.0L22.5 0.5L25.0 3.0L27.5 0.5L30.0 3.0L32.5 0.5L35.0 3.0L37.5 0.5L40.0 3.0L42.5 0.5L45.0 3.0L47.5 0.5L50.0 3.0L52.5 0.5L55.0 3.0L57.5 0.5L60.0 3.0L62.5 0.5L65.0 3.0L67.5 0.5L70.0 3.0L72.5 0.5L75.0 3.0L77.5 0.5L80.0 3.0L82.5 0.5L85.0 3.0L87.5 0.5L90.0 3.0L92.5 0.5L95.0 3.0L97.5 0.5L100.0 3.0L102.5 0.5L105.0 3.0L107.5 0.5L110.0 3.0L112.5 0.5L115.0 3.0L117.5 0.5L120.0 3.0L122.5 0.5L125.0 3.0L127.5 0.5L130.0 3.0L132.5 0.5L135.0 3.0L137.5 0.5L140.0 3.0L142.5 0.5L145.0 3.0L147.5 0.5L150.0 3.0L152.5 0.5L155.0 3.0L157.5 0.5L160.0 3.0L162.5 0.5L165.0 3.0L167.5 0.5L170.0 3.0L172.5 0.5L175.0 3.0L177.5 0.5L180.0 3.0L182.5 0.5L185.0 3.0L187.5 0.5L190.0 3.0L192.5 0.5L195.0 3.0L197.5 0.5L200.0 3.0L202.5 0.5L205.0 3.0L207.5 0.5L210.0 3.0L212.5 0.5L215.0 3.0L217.5 0.5L220.0 3.0L222.5 0.5L225.0 3.0L227.5 0.5L230.0 3.0L232.5 0.5L235.0 3.0L237.5 0.5L240.0 3.0L242.5 0.5L245.0 3.0L247.5 0.5L250.0 3.0L252.5 0.5L255.0 3.0L257.5 0.5L260.0 3.0L262.5 0.5L265.0 3.0L267.5 0.5L270.0 3.0L272.5 0.5L275.0 3.0L277.5 0.5L280.0 3.0L282.5 0.5L285.0 3.0L287.5 0.5L290.0 3.0L292.5 0.5L295.0 3.0L297.5 0.5L300.0 3.0L302.5 0.5L305.0 3.0L307.5 0.5L310.0 3.0L312.5 0.5L315.0 3.0L317.5 0.5L320.0 3.0L322.5 0.5L325.0 3.0L327.5 0.5L330.0 3.0L332.5 0.5L335.0 3.0L337.5 0.5L340.0 3.0L342.5 0.5L345.0 3.0L347.5 0.5L350.0 3.0L352.5 0.5L355.0 3.0L357.5 0.5L360.0 3.0" stroke="#a09c6c" stroke-width="1" fill="none"/></svg>
<svg class="a" style="left:61px;top:47px;" width="10" height="13" viewBox="0 0 10 13"><path d="M1 4L5 0.5L9 4V12H1Z" fill="#313335" stroke="#606366"/><path d="M3 7.5H7" stroke="#606366"/></svg>
<svg class="a" style="left:61px;top:181px;" width="10" height="13" viewBox="0 0 10 13"><path d="M1 1H9V8.5L5 12L1 8.5Z" fill="#313335" stroke="#606366"/><path d="M3 5.5H7" stroke="#606366"/></svg>
<svg class="a" style="left:61px;top:534px;" width="10" height="13" viewBox="0 0 10 13"><path d="M1 1H9V8.5L5 12L1 8.5Z" fill="#313335" stroke="#606366"/><path d="M3 5.5H7" stroke="#606366"/></svg>
<div class="a" style="left:37px;top:114px;width:2px;height:6px;background:#4d9b4d;"></div>
<div class="a" style="left:56px;top:219px;width:9px;height:44px;background:#384c38;"></div>
<svg class="a" style="left:35px;top:179px;" width="16" height="15" viewBox="0 0 16 15"><circle cx="5.5" cy="7" r="3.8" stroke="#3592c4" stroke-width="2" fill="none"/><circle cx="5.5" cy="7" r="0.9" fill="#3592c4"/><path d="M12 14V3" stroke="#c75450" stroke-width="1.6"/><path d="M9.5 4.5L12 1L14.5 4.5Z" fill="#c75450"/></svg>
<svg class="a" style="left:572px;top:7px;" width="13" height="12" viewBox="0 0 13 12"><path d="M6.5 0.5L12.5 11.5H0.5Z" fill="#d9a30e"/><rect x="5.6" y="4" width="1.8" height="3.5" fill="#2b2b2b"/><rect x="5.6" y="8.3" width="1.8" height="1.8" fill="#2b2b2b"/></svg>
<div class="t " style="left:585px;top:6.34px;font-size:12px;line-height:17px;color:#bbbbbb;">1</div>
<svg class="a" style="left:600px;top:7px;" width="14" height="12" viewBox="0 0 14 12"><path d="M7 0.5L13.5 11.5H0.5Z" fill="#8c8069"/><rect x="6.1" y="4" width="1.8" height="3.5" fill="#2b2b2b"/><rect x="6.1" y="8.3" width="1.8" height="1.8" fill="#2b2b2b"/></svg>
<div class="t " style="left:616px;top:6.34px;font-size:12px;line-height:17px;color:#bbbbbb;letter-spacing:-0.348px;">57</div>
<svg class="a" style="left:635px;top:8px;" width="13" height="13" viewBox="0 0 13 13"><path d="M1.5 5L5 8.5L12 1.5" stroke="#499c54" stroke-width="2.4" fill="none"/><path d="M1 12L3 10L5 12L7 10L9 12L11 10" stroke="#499c54" stroke-width="1" fill="none"/></svg>
<div class="t " style="left:651px;top:6.34px;font-size:12px;line-height:17px;color:#bbbbbb;">8</div>
<svg class="a" style="left:667px;top:10px;" width="9" height="6" viewBox="0 0 9 6"><path d="M1 5L4.5 1.5L8 5" stroke="#afb1b3" stroke-width="1.2" fill="none"/></svg>
<svg class="a" style="left:688px;top:10px;" width="9" height="6" viewBox="0 0 9 6"><path d="M1 1L4.5 4.5L8 1" stroke="#afb1b3" stroke-width="1.2" fill="none"/></svg>
<div class="a" style="left:691px;top:45px;width:14px;height:2px;background:#7d7357;"></div>
<div class="a" style="left:691px;top:48px;width:14px;height:2px;background:#7d7357;"></div>
<div class="a" style="left:691px;top:60px;width:14px;height:2px;background:#7d7357;"></div>
<div class="a" style="left:691px;top:108px;width:14px;height:2px;background:#7d7357;"></div>
<div class="a" style="left:691px;top:111px;width:14px;height:2px;background:#7d7357;"></div>
<div class="a" style="left:691px;top:139px;width:14px;height:2px;background:#7d7357;"></div>
<div class="a" style="left:691px;top:143px;width:14px;height:2px;background:#7d7357;"></div>
<div class="a" style="left:691px;top:146px;width:14px;height:2px;background:#7d7357;"></div>
<div class="a" style="left:691px;top:151px;width:14px;height:2px;background:#7d7357;"></div>
<div class="a" style="left:691px;top:162px;width:14px;height:2px;background:#7d7357;"></div>
<div class="a" style="left:691px;top:177px;width:14px;height:2px;background:#7d7357;"></div>
<div class="a" style="left:691px;top:193px;width:14px;height:2px;background:#7d7357;"></div>
<div class="a" style="left:691px;top:196px;width:14px;height:2px;background:#7d7357;"></div>
<div class="a" style="left:691px;top:199px;width:14px;height:2px;background:#7d7357;"></div>
<div class="a" style="left:691px;top:202px;width:14px;height:2px;background:#7d7357;"></div>
<div class="a" style="left:691px;top:215px;width:14px;height:2px;background:#7d7357;"></div>
<div class="a" style="left:691px;top:221px;width:14px;height:2px;background:#7d7357;"></div>
<div class="a" style="left:691px;top:234px;width:14px;height:2px;background:#7d7357;"></div>
<div class="a" style="left:691px;top:237px;width:14px;height:2px;background:#7d7357;"></div>
<div class="a" style="left:691px;top:246px;width:14px;height:2px;background:#7d7357;"></div>
<div class="a" style="left:691px;top:256px;width:14px;height:2px;background:#7d7357;"></div>
<div class="a" style="left:691px;top:259px;width:14px;height:2px;background:#7d7357;"></div>
<div class="a" style="left:691px;top:262px;width:14px;height:2px;background:#7d7357;"></div>
<div class="a" style="left:691px;top:275px;width:14px;height:2px;background:#7d7357;"></div>
<div class="a" style="left:691px;top:287px;width:14px;height:2px;background:#7d7357;"></div>
<div class="a" style="left:691px;top:290px;width:14px;height:2px;background:#7d7357;"></div>
<div class="a" style="left:691px;top:297px;width:14px;height:2px;background:#7d7357;"></div>
<div class="a" style="left:691px;top:312px;width:14px;height:2px;background:#7d7357;"></div>
<div class="a" style="left:691px;top:319px;width:14px;height:2px;background:#7d7357;"></div>
<div class="a" style="left:691px;top:322px;width:14px;height:2px;background:#7d7357;"></div>
<div class="a" style="left:691px;top:328px;width:14px;height:2px;background:#7d7357;"></div>
<div class="a" style="left:691px;top:331px;width:14px;height:2px;background:#7d7357;"></div>
<div class="a" style="left:691px;top:350px;width:14px;height:2px;background:#7d7357;"></div>
<div class="a" style="left:691px;top:369px;width:14px;height:2px;background:#7d7357;"></div>
<div class="a" style="left:691px;top:391px;width:14px;height:2px;background:#7d7357;"></div>
<div class="a" style="left:691px;top:397px;width:14px;height:2px;background:#7d7357;"></div>
<div class="a" style="left:691px;top:404px;width:14px;height:2px;background:#7d7357;"></div>
<div class="a" style="left:691px;top:407px;width:14px;height:2px;background:#7d7357;"></div>
<div class="a" style="left:691px;top:410px;width:14px;height:2px;background:#7d7357;"></div>
<div class="a" style="left:691px;top:413px;width:14px;height:2px;background:#7d7357;"></div>
<div class="a" style="left:691px;top:422px;width:14px;height:2px;background:#7d7357;"></div>
<div class="a" style="left:691px;top:425px;width:14px;height:2px;background:#7d7357;"></div>
<div class="a" style="left:691px;top:429px;width:14px;height:2px;background:#7d7357;"></div>
<div class="a" style="left:691px;top:435px;width:14px;height:2px;background:#7d7357;"></div>
<div class="a" style="left:691px;top:438px;width:14px;height:2px;background:#7d7357;"></div>
<div class="a" style="left:691px;top:454px;width:14px;height:2px;background:#7d7357;"></div>
<div class="a" style="left:691px;top:466px;width:14px;height:2px;background:#7d7357;"></div>
<div class="a" style="left:691px;top:576px;width:14px;height:2px;background:#7d7357;"></div>
<div class="a" style="left:691px;top:66px;width:14px;height:2px;background:#7d7357;"></div>
<div class="a" style="left:691px;top:69px;width:14px;height:2px;background:#d6a81c;"></div>
<div class="a" style="left:696px;top:272px;width:8px;height:84px;background:rgba(120,120,120,0.45);"></div>
<div class="a" style="left:687px;top:301px;width:2px;height:7px;background:#4d9b4d;"></div>
<div class="a" style="left:72px;top:595px;width:350px;height:7px;background:rgba(110,110,110,0.55);"></div>
</div>
<div class="a" style="left:178px;top:688px;width:705px;height:23px;background:#333537;"></div>
<div class="a" style="left:178px;top:688px;width:705px;height:1px;background:#2f3031;"></div>
<div class="a" style="left:217px;top:200px;width:305px;height:53px;background:#3c3f41;border:1px solid #555759"></div>
<div class="a" style="left:218px;top:206px;width:303px;height:21px;background:#4b6eaf;"></div>
<svg class="a" style="left:233px;top:209px;" width="11" height="14" viewBox="0 0 11 14"><path d="M1 1L10 7L1 13Z" fill="#59a869"/></svg>
<div class="t " style="left:250px;top:209.34px;font-size:12px;line-height:17px;color:#ffffff;letter-spacing:-0.109px;">R<span class="u">u</span>n 'examples.test_ledmat...'</div>
<div class="t " style="left:434px;top:209.34px;font-size:12px;line-height:17px;color:#d5dbe6;letter-spacing:0.049px;">Ctrl+Shift+F10</div>
<div class="t " style="left:250px;top:230.34px;font-size:12px;line-height:17px;color:#bbbbbb;letter-spacing:0.115px;">Modify Run Configuration...</div>
<svg class="a" style="left:446px;top:220px;" width="14" height="22" viewBox="0 0 14 22"><path d="M1 1V17L5 13L8 20L10.5 19L7.5 12H13Z" fill="#ffffff" stroke="#000" stroke-width="1"/></svg>
<div class="a" style="left:884px;top:58px;width:409px;height:27px;background:#3c3f41;"></div>
<div class="a" style="left:884px;top:84px;width:409px;height:1px;background:#323232;"></div>
<div class="t " style="left:890px;top:63.34px;font-size:12px;line-height:17px;color:#bbbbbb;letter-spacing:-0.168px;">BlockVisualizer</div>
<div class="t " style="left:987px;top:63.34px;font-size:12px;line-height:17px;color:#bbbbbb;letter-spacing:-0.008px;">LedMatrixTest</div>
<div class="a" style="left:975px;top:81px;width:98px;height:3px;background:#5f6366;"></div>
<svg class="a" style="left:1246px;top:64px;" width="14" height="14" viewBox="0 0 14 14"><g transform="scale(1.0)"><path d="M5.32 2.40L5.40 0.60L8.60 0.60L8.68 2.40L9.45 2.76L10.15 3.25L11.75 2.42L13.34 5.18L11.83 6.15L11.90 7.00L11.83 7.85L13.34 8.82L11.75 11.58L10.15 10.75L9.45 11.24L8.68 11.60L8.60 13.40L5.40 13.40L5.32 11.60L4.55 11.24L3.85 10.75L2.25 11.58L0.66 8.82L2.17 7.85L2.10 7.00L2.17 6.15L0.66 5.18L2.25 2.42L3.85 3.25L4.55 2.76Z" fill="#afb1b3"/><circle cx="7" cy="7" r="2.2" fill="#3c3f41"/></g></svg>
<div class="a" style="left:1273px;top:70px;width:12px;height:2px;background:#afb1b3;"></div>
<div class="t " style="left:885px;top:93.34px;font-size:12px;line-height:17px;color:#bbbbbb;letter-spacing:-0.328px;">Ready (version 0.1-SNAPSHOT built at 2022-08-11 18:35:31.8...</div>
<div class="a" style="left:1212px;top:88px;width:77px;height:24px;border:1px solid #5e6365;border-radius:3px;background:#3c3f41"></div>
<div class="a" style="left:1266px;top:89px;width:1px;height:22px;background:#5e6365;"></div>
<div class="t " style="left:1252px;top:93.34px;font-size:12px;line-height:17px;color:#bbbbbb;">1</div>
<svg class="a" style="left:1272px;top:93px;" width="11" height="15" viewBox="0 0 11 15"><path d="M1 5.5L5.5 1L10 5.5Z" fill="#9a9c9e"/><path d="M1 9.5L5.5 14L10 9.5Z" fill="#9a9c9e"/></svg>
<div class="a" style="left:884px;top:114px;width:409px;height:1px;background:#2b2b2b;"></div>
<svg class="a" style="left:884px;top:115px;" width="407" height="292" viewBox="0 0 407 292"><defs><clipPath id="dclip"><rect x="29" y="0" width="378" height="292"/></clipPath></defs><rect x="29" y="0" width="378" height="292" fill="#4e5052"/><g clip-path="url(#dclip)"><path d="M12.0 0L-300.0 312" stroke="#646668" stroke-width="1"/><path d="M28.0 0L-284.0 312" stroke="#646668" stroke-width="1"/><path d="M44.0 0L-268.0 312" stroke="#646668" stroke-width="1"/><path d="M60.0 0L-252.0 312" stroke="#646668" stroke-width="1"/><path d="M76.0 0L-236.0 312" stroke="#646668" stroke-width="1"/><path d="M92.0 0L-220.0 312" stroke="#646668" stroke-width="1"/><path d="M108.0 0L-204.0 312" stroke="#646668" stroke-width="1"/><path d="M124.0 0L-188.0 312" stroke="#646668" stroke-width="1"/><path d="M140.0 0L-172.0 312" stroke="#646668" stroke-width="1"/><path d="M156.0 0L-156.0 312" stroke="#646668" stroke-width="1"/><path d="M172.0 0L-140.0 312" stroke="#646668" stroke-width="1"/><path d="M188.0 0L-124.0 312" stroke="#646668" stroke-width="1"/><path d="M204.0 0L-108.0 312" stroke="#646668" stroke-width="1"/><path d="M220.0 0L-92.0 312" stroke="#646668" stroke-width="1"/><path d="M236.0 0L-76.0 312" stroke="#646668" stroke-width="1"/><path d="M252.0 0L-60.0 312" stroke="#646668" stroke-width="1"/><path d="M268.0 0L-44.0 312" stroke="#646668" stroke-width="1"/><path d="M284.0 0L-28.0 312" stroke="#646668" stroke-width="1"/><path d="M300.0 0L-12.0 312" stroke="#646668" stroke-width="1"/><path d="M316.0 0L4.0 312" stroke="#646668" stroke-width="1"/><path d="M332.0 0L20.0 312" stroke="#646668" stroke-width="1"/><path d="M348.0 0L36.0 312" stroke="#646668" stroke-width="1"/><path d="M364.0 0L52.0 312" stroke="#646668" stroke-width="1"/><path d="M380.0 0L68.0 312" stroke="#646668" stroke-width="1"/><path d="M396.0 0L84.0 312" stroke="#646668" stroke-width="1"/><path d="M412.0 0L100.0 312" stroke="#646668" stroke-width="1"/><path d="M428.0 0L116.0 312" stroke="#646668" stroke-width="1"/><path d="M444.0 0L132.0 312" stroke="#646668" stroke-width="1"/><path d="M460.0 0L148.0 312" stroke="#646668" stroke-width="1"/><path d="M476.0 0L164.0 312" stroke="#646668" stroke-width="1"/><path d="M492.0 0L180.0 312" stroke="#646668" stroke-width="1"/><path d="M508.0 0L196.0 312" stroke="#646668" stroke-width="1"/><path d="M524.0 0L212.0 312" stroke="#646668" stroke-width="1"/><path d="M540.0 0L228.0 312" stroke="#646668" stroke-width="1"/><path d="M556.0 0L244.0 312" stroke="#646668" stroke-width="1"/><path d="M572.0 0L260.0 312" stroke="#646668" stroke-width="1"/><path d="M588.0 0L276.0 312" stroke="#646668" stroke-width="1"/><path d="M604.0 0L292.0 312" stroke="#646668" stroke-width="1"/><path d="M620.0 0L308.0 312" stroke="#646668" stroke-width="1"/><path d="M636.0 0L324.0 312" stroke="#646668" stroke-width="1"/><path d="M652.0 0L340.0 312" stroke="#646668" stroke-width="1"/><path d="M668.0 0L356.0 312" stroke="#646668" stroke-width="1"/><path d="M684.0 0L372.0 312" stroke="#646668" stroke-width="1"/><path d="M700.0 0L388.0 312" stroke="#646668" stroke-width="1"/><path d="M716.0 0L404.0 312" stroke="#646668" stroke-width="1"/><path d="M732.0 0L420.0 312" stroke="#646668" stroke-width="1"/></g><text x="50" y="10.5" font-family="Liberation Sans" font-size="12" fill="#c4c4c4" text-anchor="start">jlc_th2</text><rect x="51.5" y="16.5" width="200" height="20" fill="#5f6163" stroke="#c4c4c4" stroke-width="1"/><text x="151" y="33.5" font-family="Liberation Sans" font-size="11.5" fill="#c4c4c4" text-anchor="middle">JlcToolingHole</text><text x="51" y="56" font-family="Liberation Sans" font-size="12" fill="#c4c4c4" text-anchor="start">id</text><rect x="51.5" y="61.5" width="200" height="20" fill="#5f6163" stroke="#c4c4c4" stroke-width="1"/><text x="151" y="78.5" font-family="Liberation Sans" font-size="11.5" fill="#c4c4c4" text-anchor="middle">IdDots4</text><text x="51" y="115.5" font-family="Liberation Sans" font-size="12" fill="#c4c4c4" text-anchor="start">prot_3v3</text><text x="116" y="101" font-family="Liberation Sans" font-size="12" fill="#c4c4c4" text-anchor="middle">gnd</text><text x="186" y="101" font-family="Liberation Sans" font-size="12" fill="#c4c4c4" text-anchor="middle">v3v3</text><path d="M116.5 102.5L116.5 111.5" stroke="#c4c4c4" stroke-width="1"/><path d="M186.5 102.5L186.5 111.5" stroke="#c4c4c4" stroke-width="1"/><rect x="51.5" y="121.5" width="200" height="20" fill="#5f6163" stroke="#c4c4c4" stroke-width="1"/><rect x="111.5" y="111.5" width="10" height="10" fill="#585a5c" stroke="#c4c4c4" stroke-width="1"/><rect x="181.5" y="111.5" width="10" height="10" fill="#585a5c" stroke="#c4c4c4" stroke-width="1"/><text x="116" y="132.5" font-family="Liberation Sans" font-size="12" fill="#c4c4c4" text-anchor="middle">gnd</text><text x="186" y="132.5" font-family="Liberation Sans" font-size="12" fill="#c4c4c4" text-anchor="middle">pwr</text><text x="151" y="138.5" font-family="Liberation Sans" font-size="11.5" fill="#c4c4c4" text-anchor="middle">ProtectionZenerDiode</text><text x="51" y="175.5" font-family="Liberation Sans" font-size="12" fill="#c4c4c4" text-anchor="start">tp_gnd</text><text x="151" y="161" font-family="Liberation Sans" font-size="12" fill="#c4c4c4" text-anchor="middle">gnd</text><path d="M151.5 162.5L151.5 171.5" stroke="#c4c4c4" stroke-width="1"/><rect x="51.5" y="181.5" width="200" height="20" fill="#5f6163" stroke="#c4c4c4" stroke-width="1"/><rect x="146.5" y="171.5" width="10" height="10" fill="#585a5c" stroke="#c4c4c4" stroke-width="1"/><text x="151" y="193" font-family="Liberation Sans" font-size="12" fill="#c4c4c4" text-anchor="middle">in</text><text x="151" y="199" font-family="Liberation Sans" font-size="11.5" fill="#c4c4c4" text-anchor="middle">VoltageTestPoint</text><text x="51" y="236" font-family="Liberation Sans" font-size="12" fill="#c4c4c4" text-anchor="start">sw1</text><text x="151" y="221.5" font-family="Liberation Sans" font-size="12" fill="#c4c4c4" text-anchor="middle">gnd</text><path d="M151.5 222.5L151.5 231.5" stroke="#c4c4c4" stroke-width="1"/><rect x="51.5" y="241.5" width="200" height="30" fill="#5f6163" stroke="#c4c4c4" stroke-width="1"/><rect x="146.5" y="231.5" width="10" height="10" fill="#585a5c" stroke="#c4c4c4" stroke-width="1"/><text x="151" y="253" font-family="Liberation Sans" font-size="12" fill="#c4c4c4" text-anchor="middle">gnd</text><text x="151" y="259" font-family="Liberation Sans" font-size="11.5" fill="#c4c4c4" text-anchor="middle">DigitalSwitch</text><text x="250" y="262" font-family="Liberation Sans" font-size="12" fill="#c4c4c4" text-anchor="end">out</text><rect x="251.5" y="252.5" width="10" height="10" fill="#585a5c" stroke="#c4c4c4" stroke-width="1"/><path d="M262.5 256.5L281.5 256.5" stroke="#c4c4c4" stroke-width="1"/><path d="M271.5 0.5L271.5 236.5" stroke="#c4c4c4" stroke-width="1"/><path d="M271.5 236.5L281.5 236.5" stroke="#c4c4c4" stroke-width="1"/><rect x="292.5" y="221.5" width="123" height="83" fill="#5f6163" stroke="#c4c4c4" stroke-width="1"/><rect x="304.5" y="211.5" width="10" height="10" fill="#585a5c" stroke="#c4c4c4" stroke-width="1"/><rect x="327.5" y="211.5" width="10" height="10" fill="#585a5c" stroke="#c4c4c4" stroke-width="1"/><rect x="351.5" y="211.5" width="10" height="10" fill="#585a5c" stroke="#c4c4c4" stroke-width="1"/><rect x="374.5" y="211.5" width="10" height="10" fill="#585a5c" stroke="#c4c4c4" stroke-width="1"/><rect x="397.5" y="211.5" width="10" height="10" fill="#585a5c" stroke="#c4c4c4" stroke-width="1"/><path d="M310.5 202.5L310.5 211.5" stroke="#c4c4c4" stroke-width="1"/><path d="M332.5 202.5L332.5 211.5" stroke="#c4c4c4" stroke-width="1"/><path d="M356.5 201.5L416.5 201.5" stroke="#c4c4c4" stroke-width="1"/><path d="M356.5 201.5L356.5 211.5" stroke="#c4c4c4" stroke-width="1"/><path d="M379.5 201.5L379.5 211.5" stroke="#c4c4c4" stroke-width="1"/><path d="M402.5 201.5L402.5 211.5" stroke="#c4c4c4" stroke-width="1"/><text x="299" y="201" font-family="Liberation Sans" font-size="12" fill="#c4c4c4" text-anchor="start">gndv3v3</text><text x="292" y="216" font-family="Liberation Sans" font-size="12" fill="#c4c4c4" text-anchor="start">mc</text><text x="299" y="236" font-family="Liberation Sans" font-size="12" fill="#c4c4c4" text-anchor="start">gnd pwr io dedi dedi 3</text><text x="312" y="241" font-family="Liberation Sans" font-size="11" fill="#b4b4b4" text-anchor="start">ESP32C3_WROOM</text><rect x="281.5" y="231.5" width="10" height="10" fill="#585a5c" stroke="#c4c4c4" stroke-width="1"/><text x="293" y="242" font-family="Liberation Sans" font-size="12" fill="#c4c4c4" text-anchor="start">usb.0</text><rect x="281.5" y="251.5" width="10" height="10" fill="#585a5c" stroke="#c4c4c4" stroke-width="1"/><text x="293" y="262" font-family="Liberation Sans" font-size="12" fill="#c4c4c4" text-anchor="start">gpio.sw1</text><rect x="281.5" y="271.5" width="10" height="10" fill="#585a5c" stroke="#c4c4c4" stroke-width="1"/><text x="293" y="282" font-family="Liberation Sans" font-size="12" fill="#c4c4c4" text-anchor="start">can.[]</text><rect x="281.5" y="291.5" width="10" height="10" fill="#585a5c" stroke="#c4c4c4" stroke-width="1"/><rect x="398" y="185" width="8" height="63" fill="#707274" opacity="0.55"/><rect x="4" y="282" width="195" height="8" fill="#6a6c6e" opacity="0.6"/></svg>
<div class="a" style="left:884px;top:407px;width:409px;height:1px;background:#2b2b2b;"></div>
<div class="a" style="left:884px;top:415px;width:132px;height:295px;border:1px solid #323232;border-bottom:none;background:#3c3f41;overflow:hidden">
<div class="a" style="left:0px;top:0px;width:121px;height:24px;background:#45484a;"></div>
<div class="a" style="left:0px;top:24px;width:121px;height:1px;background:#323232;"></div>
<div class="a" style="left:60px;top:0px;width:1px;height:24px;background:#323232;"></div>
<div class="t " style="left:9px;top:5.34px;font-size:12px;line-height:17px;color:#bbbbbb;">Path</div>
<div class="t " style="left:69px;top:5.34px;font-size:12px;line-height:17px;color:#bbbbbb;">Class</div>
<div class="a" style="left:121px;top:27px;width:9px;height:189px;background:#4d5052;"></div>
<svg class="a" style="left:4px;top:32px;" width="10" height="7" viewBox="0 0 10 7"><path d="M1 1L5 5.5L9 1" stroke="#afb1b3" stroke-width="1.3" fill="none"/></svg>
<div class="a" style="left:22px;top:25px;width:39px;height:20px;overflow:hidden">
<div class="t " style="left:0px;top:3.34px;font-size:12px;line-height:17px;color:#bbbbbb;">(root)</div>
</div>
<div class="t " style="left:64px;top:28.34px;font-size:12px;line-height:17px;color:#bbbbbb;">LedMatr...</div>
<div class="a" style="left:39px;top:45px;width:22px;height:20px;overflow:hidden">
<div class="t " style="left:0px;top:3.34px;font-size:12px;line-height:17px;color:#bbbbbb;">jlc_t</div>
</div>
<div class="t " style="left:64px;top:48.34px;font-size:12px;line-height:17px;color:#bbbbbb;">JlcTooli...</div>
<div class="a" style="left:39px;top:65px;width:22px;height:20px;overflow:hidden">
<div class="t " style="left:0px;top:3.34px;font-size:12px;line-height:17px;color:#bbbbbb;">jlc_t</div>
</div>
<div class="t " style="left:64px;top:68.34px;font-size:12px;line-height:17px;color:#bbbbbb;">JlcTooli...</div>
<div class="a" style="left:39px;top:85px;width:22px;height:20px;overflow:hidden">
<div class="t " style="left:0px;top:3.34px;font-size:12px;line-height:17px;color:#bbbbbb;">jlc_t</div>
</div>
<div class="t " style="left:64px;top:88.34px;font-size:12px;line-height:17px;color:#bbbbbb;">JlcTooli...</div>
<div class="a" style="left:39px;top:105px;width:22px;height:20px;overflow:hidden">
<div class="t " style="left:0px;top:3.34px;font-size:12px;line-height:17px;color:#bbbbbb;">usb</div>
</div>
<div class="t " style="left:64px;top:108.34px;font-size:12px;line-height:17px;color:#bbbbbb;">UsbCRe...</div>
<svg class="a" style="left:22px;top:130px;" width="7" height="10" viewBox="0 0 7 10"><path d="M1 1L5.5 5L1 9" stroke="#afb1b3" stroke-width="1.3" fill="none"/></svg>
<div class="a" style="left:39px;top:125px;width:22px;height:20px;overflow:hidden">
<div class="t " style="left:0px;top:3.34px;font-size:12px;line-height:17px;color:#bbbbbb;">tp_v</div>
</div>
<div class="t " style="left:64px;top:128.34px;font-size:12px;line-height:17px;color:#bbbbbb;">Voltage...</div>
<svg class="a" style="left:22px;top:150px;" width="7" height="10" viewBox="0 0 7 10"><path d="M1 1L5.5 5L1 9" stroke="#afb1b3" stroke-width="1.3" fill="none"/></svg>
<div class="a" style="left:39px;top:145px;width:22px;height:20px;overflow:hidden">
<div class="t " style="left:0px;top:3.34px;font-size:12px;line-height:17px;color:#bbbbbb;">tp_g</div>
</div>
<div class="t " style="left:64px;top:148.34px;font-size:12px;line-height:17px;color:#bbbbbb;">Voltage...</div>
<svg class="a" style="left:22px;top:170px;" width="7" height="10" viewBox="0 0 7 10"><path d="M1 1L5.5 5L1 9" stroke="#afb1b3" stroke-width="1.3" fill="none"/></svg>
<div class="a" style="left:39px;top:165px;width:22px;height:20px;overflow:hidden">
<div class="t " style="left:0px;top:3.34px;font-size:12px;line-height:17px;color:#bbbbbb;">reg_</div>
</div>
<div class="t " style="left:64px;top:168.34px;font-size:12px;line-height:17px;color:#bbbbbb;">Ldl1117</div>
<svg class="a" style="left:22px;top:190px;" width="7" height="10" viewBox="0 0 7 10"><path d="M1 1L5.5 5L1 9" stroke="#afb1b3" stroke-width="1.3" fill="none"/></svg>
<div class="a" style="left:39px;top:185px;width:22px;height:20px;overflow:hidden">
<div class="t " style="left:0px;top:3.34px;font-size:12px;line-height:17px;color:#bbbbbb;">tp_3</div>
</div>
<div class="t " style="left:64px;top:188.34px;font-size:12px;line-height:17px;color:#bbbbbb;">Voltage...</div>
<svg class="a" style="left:22px;top:210px;" width="7" height="10" viewBox="0 0 7 10"><path d="M1 1L5.5 5L1 9" stroke="#afb1b3" stroke-width="1.3" fill="none"/></svg>
<div class="a" style="left:39px;top:205px;width:22px;height:20px;overflow:hidden">
<div class="t " style="left:0px;top:3.34px;font-size:12px;line-height:17px;color:#bbbbbb;">prot</div>
</div>
<div class="t " style="left:64px;top:208.34px;font-size:12px;line-height:17px;color:#bbbbbb;">Protecti...</div>
<svg class="a" style="left:22px;top:230px;" width="7" height="10" viewBox="0 0 7 10"><path d="M1 1L5.5 5L1 9" stroke="#afb1b3" stroke-width="1.3" fill="none"/></svg>
<div class="a" style="left:39px;top:225px;width:22px;height:20px;overflow:hidden">
<div class="t " style="left:0px;top:3.34px;font-size:12px;line-height:17px;color:#bbbbbb;">mcu</div>
</div>
<div class="t " style="left:64px;top:228.34px;font-size:12px;line-height:17px;color:#bbbbbb;">Esp32c3...</div>
<svg class="a" style="left:22px;top:250px;" width="7" height="10" viewBox="0 0 7 10"><path d="M1 1L5.5 5L1 9" stroke="#afb1b3" stroke-width="1.3" fill="none"/></svg>
<div class="a" style="left:39px;top:245px;width:22px;height:20px;overflow:hidden">
<div class="t " style="left:0px;top:3.34px;font-size:12px;line-height:17px;color:#bbbbbb;">sw1</div>
</div>
<div class="t " style="left:64px;top:248.34px;font-size:12px;line-height:17px;color:#bbbbbb;">DigitalS...</div>
<svg class="a" style="left:22px;top:270px;" width="7" height="10" viewBox="0 0 7 10"><path d="M1 1L5.5 5L1 9" stroke="#afb1b3" stroke-width="1.3" fill="none"/></svg>
<div class="a" style="left:39px;top:265px;width:22px;height:20px;overflow:hidden">
<div class="t " style="left:0px;top:3.34px;font-size:12px;line-height:17px;color:#bbbbbb;">mat</div>
</div>
<div class="t " style="left:64px;top:268.34px;font-size:12px;line-height:17px;color:#bbbbbb;">Charliep...</div>
<svg class="a" style="left:22px;top:290px;" width="7" height="10" viewBox="0 0 7 10"><path d="M1 1L5.5 5L1 9" stroke="#afb1b3" stroke-width="1.3" fill="none"/></svg>
<div class="a" style="left:39px;top:285px;width:22px;height:20px;overflow:hidden">
<div class="t " style="left:0px;top:3.34px;font-size:12px;line-height:17px;color:#bbbbbb;">usb_e</div>
</div>
<div class="t " style="left:64px;top:288.34px;font-size:12px;line-height:17px;color:#bbbbbb;">Esb_Fc2l...</div>
</div>
<div class="a" style="left:1016px;top:415px;width:1px;height:297px;background:#323232;"></div>
<div class="t " style="left:1049px;top:422.34px;font-size:12px;line-height:17px;color:#bbbbbb;letter-spacing:0.064px;">Detail</div>
<div class="t " style="left:1135px;top:422.34px;font-size:12px;line-height:17px;color:#bbbbbb;letter-spacing:-0.363px;">Errors (0)</div>
<div class="t " style="left:1237.5px;top:422.34px;font-size:12px;line-height:17px;color:#bbbbbb;letter-spacing:-0.129px;">Kicad</div>
<div class="t " style="left:1059px;top:451.34px;font-size:12px;line-height:17px;color:#bbbbbb;letter-spacing:0.003px;">Library</div>
<div class="t " style="left:1178.5px;top:451.34px;font-size:12px;line-height:17px;color:#bbbbbb;letter-spacing:-0.087px;">Refinements</div>
<div class="a" style="left:1131px;top:475px;width:162px;height:1px;background:#323232;"></div>
<div class="a" style="left:1023px;top:472px;width:108px;height:4px;background:#4a88c7;"></div>
<div class="t " style="left:1032px;top:489.34px;font-size:12px;line-height:17px;color:#bbbbbb;">Filter</div>
<div class="a" style="left:1060px;top:484px;width:91px;height:24px;border:1px solid #646464;background:#45494a"></div>
<div class="a" style="left:1031px;top:511px;width:123px;height:196px;border:1px solid #323232;background:#3c3f41"></div>
<div class="a" style="left:1032px;top:512px;width:121px;height:24px;background:#45484a;"></div>
<div class="a" style="left:1032px;top:536px;width:121px;height:1px;background:#323232;"></div>
<div class="t " style="left:1041px;top:517.34px;font-size:12px;line-height:17px;color:#bbbbbb;">Path</div>
<svg class="a" style="left:1037px;top:542px;" width="7" height="10" viewBox="0 0 7 10"><path d="M1 1L5.5 5L1 9" stroke="#afb1b3" stroke-width="1.3" fill="none"/></svg>
<div class="t " style="left:1050px;top:540.34px;font-size:12px;line-height:17px;color:#bbbbbb;">All Blocks</div>
<svg class="a" style="left:1037px;top:562px;" width="7" height="10" viewBox="0 0 7 10"><path d="M1 1L5.5 5L1 9" stroke="#afb1b3" stroke-width="1.3" fill="none"/></svg>
<div class="t " style="left:1050px;top:560.34px;font-size:12px;line-height:17px;color:#bbbbbb;">All Ports</div>
<svg class="a" style="left:1037px;top:582px;" width="7" height="10" viewBox="0 0 7 10"><path d="M1 1L5.5 5L1 9" stroke="#afb1b3" stroke-width="1.3" fill="none"/></svg>
<div class="t " style="left:1050px;top:580.34px;font-size:12px;line-height:17px;color:#bbbbbb;">All Links</div>
<div class="t" style="left:1305px;top:87px;font-size:11px;line-height:14px;color:#dddddd;transform-origin:0 0;transform:rotate(90deg) translate(0,-4px)">BlockVisualizer</div>
<svg class="a" style="left:1297px;top:70px;" width="13" height="13" viewBox="0 0 13 13"><rect x="4.5" y="0.5" width="4" height="4" fill="#afb1b3"/><rect x="0.5" y="8.5" width="4" height="4" fill="#afb1b3"/><rect x="8.5" y="8.5" width="4" height="4" fill="#afb1b3"/><path d="M6.5 4.5V6.5H2.5V8.5M6.5 6.5H10.5V8.5" stroke="#afb1b3" fill="none"/></svg>
<div class="a" style="left:23px;top:711px;width:1270px;height:1px;background:#323232;"></div>
<div class="a" style="left:23px;top:712px;width:632px;height:26px;background:#3c3f41;"></div>
<div class="t " style="left:29.6px;top:718.34px;font-size:12px;line-height:17px;color:#bbbbbb;letter-spacing:-0.649px;">Run:</div>
<svg class="a" style="left:72px;top:719px;" width="12" height="12" viewBox="0 0 12 12"><rect x="4" y="0.5" width="4" height="4" fill="#8c8e90"/><rect x="0.5" y="7.5" width="4" height="4" fill="#8c8e90"/><rect x="7.5" y="7.5" width="4" height="4" fill="#8c8e90"/><path d="M6 4.5V6H2.5V7.5M6 6H9.5V7.5" stroke="#8c8e90" fill="none"/></svg>
<div class="t " style="left:89.5px;top:718.34px;font-size:12px;line-height:17px;color:#bbbbbb;letter-spacing:-0.087px;">examples.test_ledmatrix.LedMatrixTest</div>
<svg class="a" style="left:299px;top:721px;" width="10" height="10" viewBox="0 0 10 10"><path d="M1 1L9 9M9 1L1 9" stroke="#6e7173" stroke-width="1.1"/></svg>
<div class="a" style="left:60px;top:736px;width:259px;height:3px;background:#5f6366;"></div>
<svg class="a" style="left:609px;top:718px;" width="14" height="14" viewBox="0 0 14 14"><g transform="scale(1.0)"><path d="M5.32 2.40L5.40 0.60L8.60 0.60L8.68 2.40L9.45 2.76L10.15 3.25L11.75 2.42L13.34 5.18L11.83 6.15L11.90 7.00L11.83 7.85L13.34 8.82L11.75 11.58L10.15 10.75L9.45 11.24L8.68 11.60L8.60 13.40L5.40 13.40L5.32 11.60L4.55 11.24L3.85 10.75L2.25 11.58L0.66 8.82L2.17 7.85L2.10 7.00L2.17 6.15L0.66 5.18L2.25 2.42L3.85 3.25L4.55 2.76Z" fill="#afb1b3"/><circle cx="7" cy="7" r="2.2" fill="#3c3f41"/></g></svg>
<div class="a" style="left:635px;top:724px;width:13px;height:2px;background:#afb1b3;"></div>
<div class="a" style="left:23px;top:738px;width:632px;height:1px;background:#323232;"></div>
<div class="a" style="left:23px;top:739px;width:29px;height:148px;background:#3c3f41;"></div>
<div class="a" style="left:52px;top:739px;width:1px;height:148px;background:#323232;"></div>
<div class="a" style="left:53px;top:739px;width:27px;height:148px;background:#3c3f41;"></div>
<div class="a" style="left:80px;top:739px;width:1px;height:148px;background:#323232;"></div>
<svg class="a" style="left:32px;top:747px;" width="12" height="13" viewBox="0 0 12 13"><path d="M1 0.5L11 6.5L1 12.5Z" fill="#499c54"/></svg>
<svg class="a" style="left:30px;top:776px;" width="15" height="15" viewBox="0 0 15 15"><path d="M10.5 1C8.5 1 7 2.5 7 4.5C7 5 7.1 5.4 7.3 5.8L1 12.1L2.9 14L9.2 7.7C9.6 7.9 10 8 10.5 8C12.5 8 14 6.5 14 4.5L12 6.5L9.5 5.5L8.5 3L10.5 1Z" fill="#afb1b3"/></svg>
<div class="a" style="left:27px;top:795px;width:21px;height:1px;background:#515658;"></div>
<div class="a" style="left:32px;top:807px;width:11px;height:11px;background:#5a5d5f;"></div>
<div class="a" style="left:27px;top:828px;width:21px;height:1px;background:#515658;"></div>
<svg class="a" style="left:31px;top:840px;" width="14" height="12" viewBox="0 0 14 12"><rect x="0" y="0" width="6" height="5" fill="#afb1b3"/><rect x="7" y="0" width="7" height="5" fill="#afb1b3"/><rect x="0" y="6" width="14" height="6" fill="#afb1b3"/></svg>
<div class="a" style="left:27px;top:861px;width:21px;height:1px;background:#515658;"></div>
<div class="t " style="left:33px;top:869.34px;font-size:12px;line-height:17px;color:#afb1b3;">»</div>
<svg class="a" style="left:61px;top:747px;" width="12" height="14" viewBox="0 0 12 14"><path d="M6 13V2M1.5 6L6 1.5L10.5 6" stroke="#5a5d5f" stroke-width="1.6" fill="none"/></svg>
<svg class="a" style="left:61px;top:772px;" width="12" height="15" viewBox="0 0 12 15"><path d="M6 1V12M1.5 8L6 12.5L10.5 8" stroke="#5a5d5f" stroke-width="1.6" fill="none"/></svg>
<svg class="a" style="left:60px;top:798px;" width="14" height="15" viewBox="0 0 14 15"><path d="M1 1.5H13M1 6H11C12.5 6 13.5 7 13.5 8.5C13.5 10 12.5 11 11 11H7M9 8.5L6.5 11L9 13.5M1 11H4" stroke="#afb1b3" stroke-width="1.5" fill="none"/></svg>
<div class="a" style="left:55px;top:821px;width:22px;height:22px;background:#4c5052;"></div>
<svg class="a" style="left:59px;top:824px;" width="15" height="16" viewBox="0 0 15 16"><path d="M1 3H6M1 8H6M1 13H14M10 2V10M7 7L10 10.5L13 7" stroke="#afb1b3" stroke-width="1.6" fill="none"/></svg>
<svg class="a" style="left:59px;top:851px;" width="15" height="15" viewBox="0 0 15 15"><rect x="3.5" y="0.5" width="8" height="4" fill="none" stroke="#afb1b3" stroke-width="1.3"/><rect x="0.5" y="5" width="14" height="6" fill="#afb1b3"/><rect x="3.5" y="9.5" width="8" height="5" fill="#3c3f41" stroke="#afb1b3" stroke-width="1.3"/></svg>
<div class="t " style="left:61px;top:869.34px;font-size:12px;line-height:17px;color:#afb1b3;">»</div>
<div class="a" style="left:81px;top:739px;width:574px;height:148px;background:#2b2b2b;"></div>
<div class="t mono" style="left:93px;top:743px;font-size:13.33px;line-height:22px;color:#a8bc2c">Compile LedMatrixTest</div>
<div class="t mono" style="left:93px;top:765px;font-size:13.33px;line-height:22px;color:#bbbbbb">Hi!!!</div>
<div class="t mono" style="left:93px;top:787px;font-size:13.33px;line-height:22px;color:#bbbbbb">Compiled (reload: 661 ms, compile: 339 ms)</div>
<div class="t mono" style="left:93px;top:809px;font-size:13.33px;line-height:22px;color:#a8bc2c">Run backend electronics_model.NetlistBackend</div>
<div class="t mono" style="left:93px;top:831px;font-size:13.33px;line-height:22px;color:#bbbbbb">Wrote netlist to LedMatrixTest.net (netlist: 119 ms)</div>
<div class="a" style="left:94px;top:878px;width:427px;height:8px;background:#4d4f51;"></div>
<div class="a" style="left:646px;top:773px;width:8px;height:114px;background:#4d4f51;"></div>
<div class="a" style="left:655px;top:712px;width:1px;height:175px;background:#2b2b2b;"></div>
<div class="a" style="left:656px;top:712px;width:637px;height:26px;background:#3c3f41;"></div>
<div class="t " style="left:662px;top:718.34px;font-size:12px;line-height:17px;color:#bbbbbb;letter-spacing:-0.193px;">Event Log</div>
<svg class="a" style="left:1246px;top:718px;" width="14" height="14" viewBox="0 0 14 14"><g transform="scale(1.0)"><path d="M5.32 2.40L5.40 0.60L8.60 0.60L8.68 2.40L9.45 2.76L10.15 3.25L11.75 2.42L13.34 5.18L11.83 6.15L11.90 7.00L11.83 7.85L13.34 8.82L11.75 11.58L10.15 10.75L9.45 11.24L8.68 11.60L8.60 13.40L5.40 13.40L5.32 11.60L4.55 11.24L3.85 10.75L2.25 11.58L0.66 8.82L2.17 7.85L2.10 7.00L2.17 6.15L0.66 5.18L2.25 2.42L3.85 3.25L4.55 2.76Z" fill="#afb1b3"/><circle cx="7" cy="7" r="2.2" fill="#3c3f41"/></g></svg>
<div class="a" style="left:1273px;top:724px;width:12px;height:2px;background:#afb1b3;"></div>
<div class="a" style="left:656px;top:738px;width:637px;height:1px;background:#323232;"></div>
<div class="a" style="left:656px;top:739px;width:28px;height:148px;background:#3c3f41;"></div>
<div class="a" style="left:684px;top:739px;width:1px;height:148px;background:#323232;"></div>
<svg class="a" style="left:663px;top:747px;" width="15" height="15" viewBox="0 0 15 15"><path d="M12 1.5H1.5V13.5H12.5V8" stroke="#afb1b3" stroke-width="1.5" fill="none"/><path d="M4 6L7 9L14 2" stroke="#afb1b3" stroke-width="1.8" fill="none"/></svg>
<svg class="a" style="left:664px;top:772px;" width="13" height="15" viewBox="0 0 13 15"><rect x="0" y="2" width="13" height="2" fill="#afb1b3"/><rect x="4.5" y="0" width="4" height="2" fill="#afb1b3"/><path d="M1.5 5H11.5L10.5 15H2.5Z" fill="#afb1b3"/></svg>
<div class="a" style="left:660px;top:796px;width:21px;height:1px;background:#515658;"></div>
<svg class="a" style="left:663px;top:805px;" width="15" height="15" viewBox="0 0 15 15"><path d="M10.5 1C8.5 1 7 2.5 7 4.5C7 5 7.1 5.4 7.3 5.8L1 12.1L2.9 14L9.2 7.7C9.6 7.9 10 8 10.5 8C12.5 8 14 6.5 14 4.5L12 6.5L9.5 5.5L8.5 3L10.5 1Z" fill="#afb1b3"/></svg>
<div class="a" style="left:685px;top:739px;width:597px;height:148px;background:#2b2b2b;overflow:hidden">
<div class="t " style="left:4px;top:-8.66px;font-size:12px;line-height:17px;color:#bbbbbb;letter-spacing:-0.448px;">6:39 PM</div>
<div class="t " style="left:52.799999999999955px;top:-8.66px;font-size:12px;line-height:17px;color:#bbbbbb;letter-spacing:-0.104px;">No changes to source files</div>
<div class="t " style="left:4px;top:31.34px;font-size:12px;line-height:17px;color:#bbbbbb;letter-spacing:-0.448px;">6:39 PM</div>
<div class="t " style="left:52.799999999999955px;top:31.34px;font-size:12px;line-height:17px;color:#bbbbbb;letter-spacing:-0.104px;">No changes to source files</div>
<div class="t " style="left:4px;top:71.34px;font-size:12px;line-height:17px;color:#bbbbbb;letter-spacing:-0.448px;">6:39 PM</div>
<div class="t " style="left:52.799999999999955px;top:71.34px;font-size:12px;line-height:17px;color:#bbbbbb;letter-spacing:-0.120px;">Cleaned cache (discarded 1 changed modules): LedMatrixTest</div>
<div class="t " style="left:4px;top:111.34px;font-size:12px;line-height:17px;color:#bbbbbb;letter-spacing:-0.448px;">6:40 PM</div>
<div class="t " style="left:52.799999999999955px;top:111.34px;font-size:12px;line-height:17px;color:#bbbbbb;letter-spacing:-0.120px;">Cleaned cache (discarded 1 changed modules): LedMatrixTest</div>
</div>
<div class="a" style="left:1282px;top:739px;width:11px;height:148px;background:#2b2b2b;"></div>
<div class="a" style="left:1277px;top:746px;width:15px;height:8px;background:#499c54;"></div>
<div class="a" style="left:1283px;top:830px;width:7px;height:57px;background:#4d4f51;"></div>
<div class="a" style="left:0px;top:887px;width:1315px;height:1px;background:#323232;"></div>
<div class="a" style="left:72px;top:888px;width:56px;height:21px;background:#2d2f30;"></div>
<svg class="a" style="left:32px;top:892px;" width="11" height="14" viewBox="0 0 11 14"><path d="M2.5 2V12" stroke="#afb1b3" stroke-width="1.6"/><circle cx="2.5" cy="2" r="1.6" fill="#afb1b3"/><circle cx="2.5" cy="12" r="1.6" fill="#afb1b3"/><path d="M2.5 10C2.5 7 8.5 7 8.5 4" stroke="#afb1b3" stroke-width="1.6" fill="none"/><circle cx="8.5" cy="3.5" r="1.6" fill="#afb1b3"/></svg>
<div class="t " style="left:48.4px;top:892.34px;font-size:12px;line-height:17px;color:#bbbbbb;letter-spacing:-0.017px;">Git</div>
<svg class="a" style="left:83px;top:893px;" width="10" height="12" viewBox="0 0 10 12"><path d="M1 1L9 6L1 11Z" fill="#afb1b3"/></svg>
<div class="t " style="left:98.6px;top:892.34px;font-size:12px;line-height:17px;color:#ffffff;letter-spacing:-0.607px;">Run</div>
<svg class="a" style="left:140px;top:893px;" width="11" height="11" viewBox="0 0 11 11"><rect x="0" y="0.5" width="2" height="2" fill="#afb1b3"/><rect x="0" y="4.5" width="2" height="2" fill="#afb1b3"/><rect x="0" y="8.5" width="2" height="2" fill="#afb1b3"/><rect x="3" y="0.5" width="8" height="2" fill="#afb1b3"/><rect x="3" y="4.5" width="8" height="2" fill="#afb1b3"/><rect x="3" y="8.5" width="8" height="2" fill="#afb1b3"/></svg>
<div class="t " style="left:155px;top:892.34px;font-size:12px;line-height:17px;color:#bbbbbb;letter-spacing:-0.483px;">TODO</div>
<svg class="a" style="left:207px;top:892px;" width="13" height="13" viewBox="0 0 13 13"><circle cx="6.5" cy="6.5" r="6" fill="#afb1b3"/><rect x="5.6" y="3" width="1.8" height="5" fill="#3c3f41"/><rect x="5.6" y="9" width="1.8" height="1.8" fill="#3c3f41"/></svg>
<div class="t " style="left:224px;top:892.34px;font-size:12px;line-height:17px;color:#bbbbbb;letter-spacing:-0.455px;">Problems</div>
<svg class="a" style="left:290px;top:892px;" width="16" height="14" viewBox="0 0 16 14"><path d="M2 5L6 1L8 3L5.5 5.5Z" fill="#afb1b3"/><path d="M5 4.5L13 12.5L11.5 14L3.5 6Z" fill="#afb1b3"/></svg>
<div class="t " style="left:308.2px;top:892.34px;font-size:12px;line-height:17px;color:#bbbbbb;letter-spacing:-0.021px;">Build</div>
<svg class="a" style="left:355px;top:892px;" width="13" height="12" viewBox="0 0 13 12"><rect x="0.5" y="0.5" width="12" height="11" fill="none" stroke="#afb1b3"/><rect x="0.5" y="0.5" width="12" height="11" fill="#afb1b3"/><path d="M3 3.5L5.5 5.5L3 7.5M6.5 8.5H10" stroke="#3c3f41" stroke-width="1.3" fill="none"/></svg>
<div class="t " style="left:371px;top:892.34px;font-size:12px;line-height:17px;color:#bbbbbb;letter-spacing:-0.078px;">Terminal</div>
<svg class="a" style="left:437px;top:891px;" width="15" height="15" viewBox="0 0 15 15"><path d="M7 1C4 1 4 2 4 3V5H8V6H3C1.5 6 1 7.5 1 8.5C1 10 1.8 11 3 11H4V9.5C4 8.5 5 8 6 8H9C10 8 11 7.2 11 6V3C11 2 10 1 7 1Z" fill="#3592c4"/><path d="M8 14C11 14 11 13 11 12V10H7V9H12C13.5 9 14 7.5 14 6.5C14 5 13.2 4 12 4H11V5.5C11 6.5 10 7 9 7H6C5 7 4 7.8 4 9V12C4 13 5 14 8 14Z" fill="#afb1b3" opacity="0.9"/></svg>
<div class="t " style="left:455.5px;top:892.34px;font-size:12px;line-height:17px;color:#bbbbbb;letter-spacing:-0.244px;">Mypy Terminal</div>
<svg class="a" style="left:553px;top:891px;" width="14" height="15" viewBox="0 0 14 15"><path d="M7 1L13 4L7 7L1 4Z" fill="#afb1b3"/><path d="M1 7L7 10L13 7M1 10L7 13L13 10" stroke="#afb1b3" stroke-width="1.3" fill="none"/></svg>
<div class="t " style="left:570.4px;top:892.34px;font-size:12px;line-height:17px;color:#bbbbbb;letter-spacing:-0.521px;">Python Packages</div>
<div class="a" style="left:1204px;top:888px;width:88px;height:21px;background:#2d2f30;"></div>
<svg class="a" style="left:1214px;top:892px;" width="14" height="14" viewBox="0 0 14 14"><circle cx="7" cy="7" r="6.5" fill="#e3a126"/><text x="7" y="10.5" font-family="Liberation Sans" font-size="9" fill="#3c3f41" text-anchor="middle" font-weight="700">8</text></svg>
<div class="t " style="left:1232.7px;top:892.34px;font-size:12px;line-height:17px;color:#ffffff;letter-spacing:-0.505px;">Event Log</div>
<div class="a" style="left:0px;top:909px;width:1315px;height:1px;background:#323232;"></div>
<svg class="a" style="left:7px;top:912px;" width="14" height="14" viewBox="0 0 14 14"><rect x="3.5" y="0.5" width="10" height="10" fill="none" stroke="#afb1b3"/><path d="M0.5 3.5V13.5H10.5" stroke="#afb1b3" fill="none"/></svg>
<div class="t " style="left:28.4px;top:912.34px;font-size:12px;line-height:17px;color:#bbbbbb;letter-spacing:-0.097px;">Cleaned cache (discarded 1 changed modules): LedMatrixTest (a minute ago)</div>
<div class="t " style="left:1002.9px;top:912.34px;font-size:12px;line-height:17px;color:#bbbbbb;letter-spacing:-0.785px;">82:1</div>
<div class="t " style="left:1036.5px;top:912.34px;font-size:12px;line-height:17px;color:#bbbbbb;letter-spacing:-2.004px;">LF</div>
<div class="t " style="left:1060.4px;top:912.34px;font-size:12px;line-height:17px;color:#bbbbbb;letter-spacing:-0.649px;">UTF-8</div>
<div class="t " style="left:1103.2px;top:912.34px;font-size:12px;line-height:17px;color:#bbbbbb;letter-spacing:-0.461px;">2 spaces</div>
<svg class="a" style="left:1160px;top:913px;" width="11" height="14" viewBox="0 0 11 14"><circle cx="2.5" cy="2.5" r="1.8" stroke="#afb1b3" fill="none" stroke-width="1.2"/><circle cx="8.5" cy="3.5" r="1.8" stroke="#afb1b3" fill="none" stroke-width="1.2"/><path d="M2.5 4.5V13M8.5 5.5C8.5 9 2.5 8 2.5 11" stroke="#afb1b3" stroke-width="1.2" fill="none"/></svg>
<div class="t " style="left:1176.6px;top:912.34px;font-size:12px;line-height:17px;color:#bbbbbb;letter-spacing:0.190px;">backend-proto</div>
<svg class="a" style="left:1264px;top:913px;" width="14" height="14" viewBox="0 0 14 14"><rect x="4" y="6" width="9" height="7" fill="#afb1b3"/><path d="M1.5 6V3C1.5 1.5 2.5 0.8 4 0.8C5.5 0.8 6.5 1.5 6.5 3V6" stroke="#afb1b3" stroke-width="1.4" fill="none"/></svg>
<svg class="a" style="left:1289px;top:912px;" width="14" height="14" viewBox="0 0 14 14"><circle cx="7.5" cy="7.5" r="7" fill="#c75450"/><rect x="6.6" y="3" width="1.8" height="6" fill="#3c3f41"/><rect x="6.6" y="10.3" width="1.8" height="1.8" fill="#3c3f41"/></svg>
<div class="t" style="left:13.7px;top:764px;font-size:11px;line-height:14px;color:#bbbbbb;transform-origin:0 0;transform:rotate(-90deg) translate(0,-7px)">Structure</div>
<svg class="a" style="left:8px;top:770px;" width="10" height="10" viewBox="0 0 10 10"><rect x="0" y="5" width="4" height="4" fill="#afb1b3"/><rect x="6" y="5" width="4" height="4" fill="#afb1b3"/><rect x="6" y="0" width="4" height="4" fill="#afb1b3"/></svg>
<div class="t" style="left:13.7px;top:858px;font-size:11px;line-height:14px;color:#bbbbbb;transform-origin:0 0;transform:rotate(-90deg) translate(0,-7px)">Bookmarks</div>
<svg class="a" style="left:8px;top:863px;" width="10" height="12" viewBox="0 0 10 12"><path d="M0 0H9V11L4.5 7.5L0 11Z" fill="#afb1b3"/></svg>
</body></html>
